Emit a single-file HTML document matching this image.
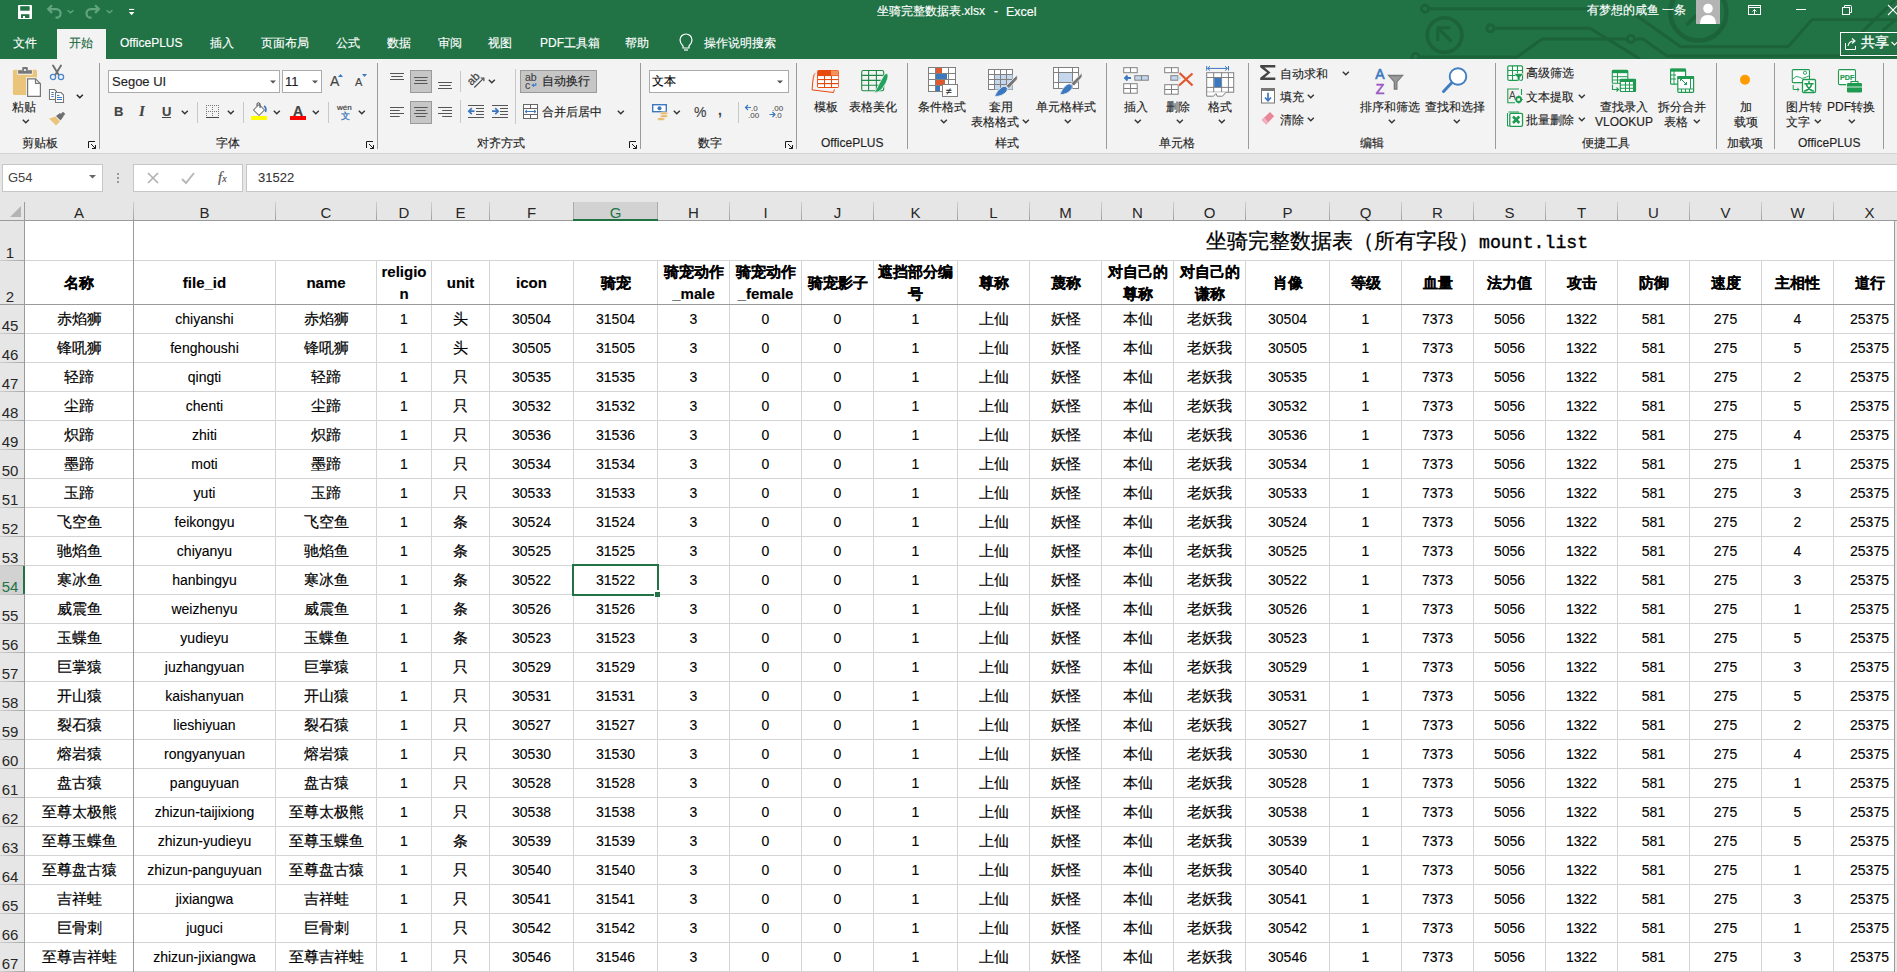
<!DOCTYPE html>
<html><head><meta charset="utf-8"><style>
html,body{margin:0;padding:0;}
body{width:1897px;height:972px;position:relative;overflow:hidden;background:#fff;font-family:'Liberation Sans', sans-serif;}
.t{position:absolute;white-space:nowrap;-webkit-text-stroke:0.15px currentColor;}
.r{position:absolute;}
.s{position:absolute;overflow:visible;}
</style></head><body>
<div class="r" style="left:0px;top:192px;width:1897px;height:780px;background:#ffffff"></div><div class="r" style="left:0px;top:201px;width:1897px;height:19px;background:#e6e6e6"></div><div class="r" style="left:0px;top:201px;width:24px;height:771px;background:#e6e6e6"></div><div class="r" style="left:25px;top:260px;width:1872px;height:1px;background:#d4d4d4"></div><div class="r" style="left:25px;top:333px;width:1872px;height:1px;background:#d4d4d4"></div><div class="r" style="left:25px;top:362px;width:1872px;height:1px;background:#d4d4d4"></div><div class="r" style="left:25px;top:391px;width:1872px;height:1px;background:#d4d4d4"></div><div class="r" style="left:25px;top:420px;width:1872px;height:1px;background:#d4d4d4"></div><div class="r" style="left:25px;top:449px;width:1872px;height:1px;background:#d4d4d4"></div><div class="r" style="left:25px;top:478px;width:1872px;height:1px;background:#d4d4d4"></div><div class="r" style="left:25px;top:507px;width:1872px;height:1px;background:#d4d4d4"></div><div class="r" style="left:25px;top:536px;width:1872px;height:1px;background:#d4d4d4"></div><div class="r" style="left:25px;top:565px;width:1872px;height:1px;background:#d4d4d4"></div><div class="r" style="left:25px;top:594px;width:1872px;height:1px;background:#d4d4d4"></div><div class="r" style="left:25px;top:623px;width:1872px;height:1px;background:#d4d4d4"></div><div class="r" style="left:25px;top:652px;width:1872px;height:1px;background:#d4d4d4"></div><div class="r" style="left:25px;top:681px;width:1872px;height:1px;background:#d4d4d4"></div><div class="r" style="left:25px;top:710px;width:1872px;height:1px;background:#d4d4d4"></div><div class="r" style="left:25px;top:739px;width:1872px;height:1px;background:#d4d4d4"></div><div class="r" style="left:25px;top:768px;width:1872px;height:1px;background:#d4d4d4"></div><div class="r" style="left:25px;top:797px;width:1872px;height:1px;background:#d4d4d4"></div><div class="r" style="left:25px;top:826px;width:1872px;height:1px;background:#d4d4d4"></div><div class="r" style="left:25px;top:855px;width:1872px;height:1px;background:#d4d4d4"></div><div class="r" style="left:25px;top:884px;width:1872px;height:1px;background:#d4d4d4"></div><div class="r" style="left:25px;top:913px;width:1872px;height:1px;background:#d4d4d4"></div><div class="r" style="left:25px;top:942px;width:1872px;height:1px;background:#d4d4d4"></div><div class="r" style="left:25px;top:971px;width:1872px;height:1px;background:#d4d4d4"></div><div class="r" style="left:0px;top:260px;width:24px;height:1px;background:linear-gradient(to right,#cfcfcf,#a6a6a6)"></div><div class="r" style="left:0px;top:333px;width:24px;height:1px;background:linear-gradient(to right,#cfcfcf,#a6a6a6)"></div><div class="r" style="left:0px;top:362px;width:24px;height:1px;background:linear-gradient(to right,#cfcfcf,#a6a6a6)"></div><div class="r" style="left:0px;top:391px;width:24px;height:1px;background:linear-gradient(to right,#cfcfcf,#a6a6a6)"></div><div class="r" style="left:0px;top:420px;width:24px;height:1px;background:linear-gradient(to right,#cfcfcf,#a6a6a6)"></div><div class="r" style="left:0px;top:449px;width:24px;height:1px;background:linear-gradient(to right,#cfcfcf,#a6a6a6)"></div><div class="r" style="left:0px;top:478px;width:24px;height:1px;background:linear-gradient(to right,#cfcfcf,#a6a6a6)"></div><div class="r" style="left:0px;top:507px;width:24px;height:1px;background:linear-gradient(to right,#cfcfcf,#a6a6a6)"></div><div class="r" style="left:0px;top:536px;width:24px;height:1px;background:linear-gradient(to right,#cfcfcf,#a6a6a6)"></div><div class="r" style="left:0px;top:565px;width:24px;height:1px;background:linear-gradient(to right,#cfcfcf,#a6a6a6)"></div><div class="r" style="left:0px;top:594px;width:24px;height:1px;background:linear-gradient(to right,#cfcfcf,#a6a6a6)"></div><div class="r" style="left:0px;top:623px;width:24px;height:1px;background:linear-gradient(to right,#cfcfcf,#a6a6a6)"></div><div class="r" style="left:0px;top:652px;width:24px;height:1px;background:linear-gradient(to right,#cfcfcf,#a6a6a6)"></div><div class="r" style="left:0px;top:681px;width:24px;height:1px;background:linear-gradient(to right,#cfcfcf,#a6a6a6)"></div><div class="r" style="left:0px;top:710px;width:24px;height:1px;background:linear-gradient(to right,#cfcfcf,#a6a6a6)"></div><div class="r" style="left:0px;top:739px;width:24px;height:1px;background:linear-gradient(to right,#cfcfcf,#a6a6a6)"></div><div class="r" style="left:0px;top:768px;width:24px;height:1px;background:linear-gradient(to right,#cfcfcf,#a6a6a6)"></div><div class="r" style="left:0px;top:797px;width:24px;height:1px;background:linear-gradient(to right,#cfcfcf,#a6a6a6)"></div><div class="r" style="left:0px;top:826px;width:24px;height:1px;background:linear-gradient(to right,#cfcfcf,#a6a6a6)"></div><div class="r" style="left:0px;top:855px;width:24px;height:1px;background:linear-gradient(to right,#cfcfcf,#a6a6a6)"></div><div class="r" style="left:0px;top:884px;width:24px;height:1px;background:linear-gradient(to right,#cfcfcf,#a6a6a6)"></div><div class="r" style="left:0px;top:913px;width:24px;height:1px;background:linear-gradient(to right,#cfcfcf,#a6a6a6)"></div><div class="r" style="left:0px;top:942px;width:24px;height:1px;background:linear-gradient(to right,#cfcfcf,#a6a6a6)"></div><div class="r" style="left:0px;top:971px;width:24px;height:1px;background:linear-gradient(to right,#cfcfcf,#a6a6a6)"></div><div class="r" style="left:275px;top:261px;width:1px;height:711px;background:#d4d4d4"></div><div class="r" style="left:376px;top:261px;width:1px;height:711px;background:#d4d4d4"></div><div class="r" style="left:431px;top:261px;width:1px;height:711px;background:#d4d4d4"></div><div class="r" style="left:489px;top:261px;width:1px;height:711px;background:#d4d4d4"></div><div class="r" style="left:573px;top:261px;width:1px;height:711px;background:#d4d4d4"></div><div class="r" style="left:657px;top:261px;width:1px;height:711px;background:#d4d4d4"></div><div class="r" style="left:729px;top:261px;width:1px;height:711px;background:#d4d4d4"></div><div class="r" style="left:801px;top:261px;width:1px;height:711px;background:#d4d4d4"></div><div class="r" style="left:873px;top:261px;width:1px;height:711px;background:#d4d4d4"></div><div class="r" style="left:957px;top:261px;width:1px;height:711px;background:#d4d4d4"></div><div class="r" style="left:1029px;top:261px;width:1px;height:711px;background:#d4d4d4"></div><div class="r" style="left:1101px;top:261px;width:1px;height:711px;background:#d4d4d4"></div><div class="r" style="left:1173px;top:261px;width:1px;height:711px;background:#d4d4d4"></div><div class="r" style="left:1245px;top:261px;width:1px;height:711px;background:#d4d4d4"></div><div class="r" style="left:1329px;top:261px;width:1px;height:711px;background:#d4d4d4"></div><div class="r" style="left:1401px;top:261px;width:1px;height:711px;background:#d4d4d4"></div><div class="r" style="left:1473px;top:261px;width:1px;height:711px;background:#d4d4d4"></div><div class="r" style="left:1545px;top:261px;width:1px;height:711px;background:#d4d4d4"></div><div class="r" style="left:1617px;top:261px;width:1px;height:711px;background:#d4d4d4"></div><div class="r" style="left:1689px;top:261px;width:1px;height:711px;background:#d4d4d4"></div><div class="r" style="left:1761px;top:261px;width:1px;height:711px;background:#d4d4d4"></div><div class="r" style="left:1833px;top:261px;width:1px;height:711px;background:#d4d4d4"></div><div class="r" style="left:0px;top:304px;width:1897px;height:1px;background:#9b9b9b"></div><div class="r" style="left:133px;top:220px;width:1px;height:752px;background:#9b9b9b"></div><div class="r" style="left:0px;top:220px;width:1897px;height:1px;background:#9b9b9b"></div><div class="r" style="left:24px;top:202px;width:1px;height:770px;background:#9b9b9b"></div><div class="r" style="left:1894px;top:220px;width:1px;height:752px;background:#9b9b9b"></div><div class="r" style="left:1895px;top:221px;width:2px;height:751px;background:#e6e6e6"></div><div class="r" style="left:133px;top:202px;width:1px;height:18px;background:linear-gradient(#cfcfcf,#a0a0a0)"></div><div class="r" style="left:275px;top:202px;width:1px;height:18px;background:linear-gradient(#cfcfcf,#a0a0a0)"></div><div class="r" style="left:376px;top:202px;width:1px;height:18px;background:linear-gradient(#cfcfcf,#a0a0a0)"></div><div class="r" style="left:431px;top:202px;width:1px;height:18px;background:linear-gradient(#cfcfcf,#a0a0a0)"></div><div class="r" style="left:489px;top:202px;width:1px;height:18px;background:linear-gradient(#cfcfcf,#a0a0a0)"></div><div class="r" style="left:573px;top:202px;width:1px;height:18px;background:linear-gradient(#cfcfcf,#a0a0a0)"></div><div class="r" style="left:657px;top:202px;width:1px;height:18px;background:linear-gradient(#cfcfcf,#a0a0a0)"></div><div class="r" style="left:729px;top:202px;width:1px;height:18px;background:linear-gradient(#cfcfcf,#a0a0a0)"></div><div class="r" style="left:801px;top:202px;width:1px;height:18px;background:linear-gradient(#cfcfcf,#a0a0a0)"></div><div class="r" style="left:873px;top:202px;width:1px;height:18px;background:linear-gradient(#cfcfcf,#a0a0a0)"></div><div class="r" style="left:957px;top:202px;width:1px;height:18px;background:linear-gradient(#cfcfcf,#a0a0a0)"></div><div class="r" style="left:1029px;top:202px;width:1px;height:18px;background:linear-gradient(#cfcfcf,#a0a0a0)"></div><div class="r" style="left:1101px;top:202px;width:1px;height:18px;background:linear-gradient(#cfcfcf,#a0a0a0)"></div><div class="r" style="left:1173px;top:202px;width:1px;height:18px;background:linear-gradient(#cfcfcf,#a0a0a0)"></div><div class="r" style="left:1245px;top:202px;width:1px;height:18px;background:linear-gradient(#cfcfcf,#a0a0a0)"></div><div class="r" style="left:1329px;top:202px;width:1px;height:18px;background:linear-gradient(#cfcfcf,#a0a0a0)"></div><div class="r" style="left:1401px;top:202px;width:1px;height:18px;background:linear-gradient(#cfcfcf,#a0a0a0)"></div><div class="r" style="left:1473px;top:202px;width:1px;height:18px;background:linear-gradient(#cfcfcf,#a0a0a0)"></div><div class="r" style="left:1545px;top:202px;width:1px;height:18px;background:linear-gradient(#cfcfcf,#a0a0a0)"></div><div class="r" style="left:1617px;top:202px;width:1px;height:18px;background:linear-gradient(#cfcfcf,#a0a0a0)"></div><div class="r" style="left:1689px;top:202px;width:1px;height:18px;background:linear-gradient(#cfcfcf,#a0a0a0)"></div><div class="r" style="left:1761px;top:202px;width:1px;height:18px;background:linear-gradient(#cfcfcf,#a0a0a0)"></div><div class="r" style="left:1833px;top:202px;width:1px;height:18px;background:linear-gradient(#cfcfcf,#a0a0a0)"></div><div class="r" style="left:573px;top:202px;width:85px;height:17px;background:#d2d2d2"></div><div class="r" style="left:573px;top:202px;width:1px;height:18px;background:#ababab"></div><div class="r" style="left:657px;top:202px;width:1px;height:18px;background:#ababab"></div><div class="r" style="left:573px;top:219px;width:85px;height:2px;background:#217346"></div><svg class="s" style="left:0px;top:201px;" width="24" height="19" viewBox="0 0 24 19"><polygon points="21,5 21,16 10,16" fill="#b4b4b4"/></svg><div class="t" style="left:49.0px;width:60px;text-align:center;top:205px;font-size:15px;line-height:15px;color:#262626;font-weight:normal;-webkit-text-stroke:0">A</div><div class="t" style="left:174.5px;width:60px;text-align:center;top:205px;font-size:15px;line-height:15px;color:#262626;font-weight:normal;-webkit-text-stroke:0">B</div><div class="t" style="left:296.0px;width:60px;text-align:center;top:205px;font-size:15px;line-height:15px;color:#262626;font-weight:normal;-webkit-text-stroke:0">C</div><div class="t" style="left:374.0px;width:60px;text-align:center;top:205px;font-size:15px;line-height:15px;color:#262626;font-weight:normal;-webkit-text-stroke:0">D</div><div class="t" style="left:430.5px;width:60px;text-align:center;top:205px;font-size:15px;line-height:15px;color:#262626;font-weight:normal;-webkit-text-stroke:0">E</div><div class="t" style="left:501.5px;width:60px;text-align:center;top:205px;font-size:15px;line-height:15px;color:#262626;font-weight:normal;-webkit-text-stroke:0">F</div><div class="t" style="left:585.5px;width:60px;text-align:center;top:205px;font-size:15px;line-height:15px;color:#217346;font-weight:normal;-webkit-text-stroke:0">G</div><div class="t" style="left:663.5px;width:60px;text-align:center;top:205px;font-size:15px;line-height:15px;color:#262626;font-weight:normal;-webkit-text-stroke:0">H</div><div class="t" style="left:735.5px;width:60px;text-align:center;top:205px;font-size:15px;line-height:15px;color:#262626;font-weight:normal;-webkit-text-stroke:0">I</div><div class="t" style="left:807.5px;width:60px;text-align:center;top:205px;font-size:15px;line-height:15px;color:#262626;font-weight:normal;-webkit-text-stroke:0">J</div><div class="t" style="left:885.5px;width:60px;text-align:center;top:205px;font-size:15px;line-height:15px;color:#262626;font-weight:normal;-webkit-text-stroke:0">K</div><div class="t" style="left:963.5px;width:60px;text-align:center;top:205px;font-size:15px;line-height:15px;color:#262626;font-weight:normal;-webkit-text-stroke:0">L</div><div class="t" style="left:1035.5px;width:60px;text-align:center;top:205px;font-size:15px;line-height:15px;color:#262626;font-weight:normal;-webkit-text-stroke:0">M</div><div class="t" style="left:1107.5px;width:60px;text-align:center;top:205px;font-size:15px;line-height:15px;color:#262626;font-weight:normal;-webkit-text-stroke:0">N</div><div class="t" style="left:1179.5px;width:60px;text-align:center;top:205px;font-size:15px;line-height:15px;color:#262626;font-weight:normal;-webkit-text-stroke:0">O</div><div class="t" style="left:1257.5px;width:60px;text-align:center;top:205px;font-size:15px;line-height:15px;color:#262626;font-weight:normal;-webkit-text-stroke:0">P</div><div class="t" style="left:1335.5px;width:60px;text-align:center;top:205px;font-size:15px;line-height:15px;color:#262626;font-weight:normal;-webkit-text-stroke:0">Q</div><div class="t" style="left:1407.5px;width:60px;text-align:center;top:205px;font-size:15px;line-height:15px;color:#262626;font-weight:normal;-webkit-text-stroke:0">R</div><div class="t" style="left:1479.5px;width:60px;text-align:center;top:205px;font-size:15px;line-height:15px;color:#262626;font-weight:normal;-webkit-text-stroke:0">S</div><div class="t" style="left:1551.5px;width:60px;text-align:center;top:205px;font-size:15px;line-height:15px;color:#262626;font-weight:normal;-webkit-text-stroke:0">T</div><div class="t" style="left:1623.5px;width:60px;text-align:center;top:205px;font-size:15px;line-height:15px;color:#262626;font-weight:normal;-webkit-text-stroke:0">U</div><div class="t" style="left:1695.5px;width:60px;text-align:center;top:205px;font-size:15px;line-height:15px;color:#262626;font-weight:normal;-webkit-text-stroke:0">V</div><div class="t" style="left:1767.5px;width:60px;text-align:center;top:205px;font-size:15px;line-height:15px;color:#262626;font-weight:normal;-webkit-text-stroke:0">W</div><div class="t" style="left:1839.5px;width:60px;text-align:center;top:205px;font-size:15px;line-height:15px;color:#262626;font-weight:normal;-webkit-text-stroke:0">X</div><div class="t" style="left:-5.0px;width:30px;text-align:center;top:245px;font-size:15px;line-height:15px;color:#262626;font-weight:normal;-webkit-text-stroke:0">1</div><div class="t" style="left:-5.0px;width:30px;text-align:center;top:289px;font-size:15px;line-height:15px;color:#262626;font-weight:normal;-webkit-text-stroke:0">2</div><div class="t" style="left:-5.0px;width:30px;text-align:center;top:318px;font-size:15px;line-height:15px;color:#262626;font-weight:normal;-webkit-text-stroke:0">45</div><div class="t" style="left:-5.0px;width:30px;text-align:center;top:347px;font-size:15px;line-height:15px;color:#262626;font-weight:normal;-webkit-text-stroke:0">46</div><div class="t" style="left:-5.0px;width:30px;text-align:center;top:376px;font-size:15px;line-height:15px;color:#262626;font-weight:normal;-webkit-text-stroke:0">47</div><div class="t" style="left:-5.0px;width:30px;text-align:center;top:405px;font-size:15px;line-height:15px;color:#262626;font-weight:normal;-webkit-text-stroke:0">48</div><div class="t" style="left:-5.0px;width:30px;text-align:center;top:434px;font-size:15px;line-height:15px;color:#262626;font-weight:normal;-webkit-text-stroke:0">49</div><div class="t" style="left:-5.0px;width:30px;text-align:center;top:463px;font-size:15px;line-height:15px;color:#262626;font-weight:normal;-webkit-text-stroke:0">50</div><div class="t" style="left:-5.0px;width:30px;text-align:center;top:492px;font-size:15px;line-height:15px;color:#262626;font-weight:normal;-webkit-text-stroke:0">51</div><div class="t" style="left:-5.0px;width:30px;text-align:center;top:521px;font-size:15px;line-height:15px;color:#262626;font-weight:normal;-webkit-text-stroke:0">52</div><div class="t" style="left:-5.0px;width:30px;text-align:center;top:550px;font-size:15px;line-height:15px;color:#262626;font-weight:normal;-webkit-text-stroke:0">53</div><div class="r" style="left:0px;top:566px;width:23px;height:28px;background:#d2d2d2"></div><div class="r" style="left:23px;top:566px;width:2px;height:28px;background:#217346"></div><div class="t" style="left:-5.0px;width:30px;text-align:center;top:579px;font-size:15px;line-height:15px;color:#217346;font-weight:normal;-webkit-text-stroke:0">54</div><div class="t" style="left:-5.0px;width:30px;text-align:center;top:608px;font-size:15px;line-height:15px;color:#262626;font-weight:normal;-webkit-text-stroke:0">55</div><div class="t" style="left:-5.0px;width:30px;text-align:center;top:637px;font-size:15px;line-height:15px;color:#262626;font-weight:normal;-webkit-text-stroke:0">56</div><div class="t" style="left:-5.0px;width:30px;text-align:center;top:666px;font-size:15px;line-height:15px;color:#262626;font-weight:normal;-webkit-text-stroke:0">57</div><div class="t" style="left:-5.0px;width:30px;text-align:center;top:695px;font-size:15px;line-height:15px;color:#262626;font-weight:normal;-webkit-text-stroke:0">58</div><div class="t" style="left:-5.0px;width:30px;text-align:center;top:724px;font-size:15px;line-height:15px;color:#262626;font-weight:normal;-webkit-text-stroke:0">59</div><div class="t" style="left:-5.0px;width:30px;text-align:center;top:753px;font-size:15px;line-height:15px;color:#262626;font-weight:normal;-webkit-text-stroke:0">60</div><div class="t" style="left:-5.0px;width:30px;text-align:center;top:782px;font-size:15px;line-height:15px;color:#262626;font-weight:normal;-webkit-text-stroke:0">61</div><div class="t" style="left:-5.0px;width:30px;text-align:center;top:811px;font-size:15px;line-height:15px;color:#262626;font-weight:normal;-webkit-text-stroke:0">62</div><div class="t" style="left:-5.0px;width:30px;text-align:center;top:840px;font-size:15px;line-height:15px;color:#262626;font-weight:normal;-webkit-text-stroke:0">63</div><div class="t" style="left:-5.0px;width:30px;text-align:center;top:869px;font-size:15px;line-height:15px;color:#262626;font-weight:normal;-webkit-text-stroke:0">64</div><div class="t" style="left:-5.0px;width:30px;text-align:center;top:898px;font-size:15px;line-height:15px;color:#262626;font-weight:normal;-webkit-text-stroke:0">65</div><div class="t" style="left:-5.0px;width:30px;text-align:center;top:927px;font-size:15px;line-height:15px;color:#262626;font-weight:normal;-webkit-text-stroke:0">66</div><div class="t" style="left:-5.0px;width:30px;text-align:center;top:956px;font-size:15px;line-height:15px;color:#262626;font-weight:normal;-webkit-text-stroke:0">67</div><div class="t" style="left:4.5px;width:149px;text-align:center;top:311px;font-size:15px;line-height:15px;color:#000;font-weight:normal;-webkit-text-stroke:0.2px #000">赤焰狮</div><div class="t" style="left:113.5px;width:182px;text-align:center;top:312px;font-size:14px;line-height:14px;color:#000;font-weight:normal;-webkit-text-stroke:0.1px #000">chiyanshi</div><div class="t" style="left:255.5px;width:141px;text-align:center;top:311px;font-size:15px;line-height:15px;color:#000;font-weight:normal;-webkit-text-stroke:0.2px #000">赤焰狮</div><div class="t" style="left:356.5px;width:95px;text-align:center;top:312px;font-size:14px;line-height:14px;color:#000;font-weight:normal;-webkit-text-stroke:0.1px #000">1</div><div class="t" style="left:411.5px;width:98px;text-align:center;top:311px;font-size:15px;line-height:15px;color:#000;font-weight:normal;-webkit-text-stroke:0.2px #000">头</div><div class="t" style="left:469.5px;width:124px;text-align:center;top:312px;font-size:14px;line-height:14px;color:#000;font-weight:normal;-webkit-text-stroke:0.1px #000">30504</div><div class="t" style="left:553.5px;width:124px;text-align:center;top:312px;font-size:14px;line-height:14px;color:#000;font-weight:normal;-webkit-text-stroke:0.1px #000">31504</div><div class="t" style="left:637.5px;width:112px;text-align:center;top:312px;font-size:14px;line-height:14px;color:#000;font-weight:normal;-webkit-text-stroke:0.1px #000">3</div><div class="t" style="left:709.5px;width:112px;text-align:center;top:312px;font-size:14px;line-height:14px;color:#000;font-weight:normal;-webkit-text-stroke:0.1px #000">0</div><div class="t" style="left:781.5px;width:112px;text-align:center;top:312px;font-size:14px;line-height:14px;color:#000;font-weight:normal;-webkit-text-stroke:0.1px #000">0</div><div class="t" style="left:853.5px;width:124px;text-align:center;top:312px;font-size:14px;line-height:14px;color:#000;font-weight:normal;-webkit-text-stroke:0.1px #000">1</div><div class="t" style="left:937.5px;width:112px;text-align:center;top:311px;font-size:15px;line-height:15px;color:#000;font-weight:normal;-webkit-text-stroke:0.2px #000">上仙</div><div class="t" style="left:1009.5px;width:112px;text-align:center;top:311px;font-size:15px;line-height:15px;color:#000;font-weight:normal;-webkit-text-stroke:0.2px #000">妖怪</div><div class="t" style="left:1081.5px;width:112px;text-align:center;top:311px;font-size:15px;line-height:15px;color:#000;font-weight:normal;-webkit-text-stroke:0.2px #000">本仙</div><div class="t" style="left:1153.5px;width:112px;text-align:center;top:311px;font-size:15px;line-height:15px;color:#000;font-weight:normal;-webkit-text-stroke:0.2px #000">老妖我</div><div class="t" style="left:1225.5px;width:124px;text-align:center;top:312px;font-size:14px;line-height:14px;color:#000;font-weight:normal;-webkit-text-stroke:0.1px #000">30504</div><div class="t" style="left:1309.5px;width:112px;text-align:center;top:312px;font-size:14px;line-height:14px;color:#000;font-weight:normal;-webkit-text-stroke:0.1px #000">1</div><div class="t" style="left:1381.5px;width:112px;text-align:center;top:312px;font-size:14px;line-height:14px;color:#000;font-weight:normal;-webkit-text-stroke:0.1px #000">7373</div><div class="t" style="left:1453.5px;width:112px;text-align:center;top:312px;font-size:14px;line-height:14px;color:#000;font-weight:normal;-webkit-text-stroke:0.1px #000">5056</div><div class="t" style="left:1525.5px;width:112px;text-align:center;top:312px;font-size:14px;line-height:14px;color:#000;font-weight:normal;-webkit-text-stroke:0.1px #000">1322</div><div class="t" style="left:1597.5px;width:112px;text-align:center;top:312px;font-size:14px;line-height:14px;color:#000;font-weight:normal;-webkit-text-stroke:0.1px #000">581</div><div class="t" style="left:1669.5px;width:112px;text-align:center;top:312px;font-size:14px;line-height:14px;color:#000;font-weight:normal;-webkit-text-stroke:0.1px #000">275</div><div class="t" style="left:1741.5px;width:112px;text-align:center;top:312px;font-size:14px;line-height:14px;color:#000;font-weight:normal;-webkit-text-stroke:0.1px #000">4</div><div class="t" style="left:1813.5px;width:112px;text-align:center;top:312px;font-size:14px;line-height:14px;color:#000;font-weight:normal;-webkit-text-stroke:0.1px #000">25375</div><div class="t" style="left:4.5px;width:149px;text-align:center;top:340px;font-size:15px;line-height:15px;color:#000;font-weight:normal;-webkit-text-stroke:0.2px #000">锋吼狮</div><div class="t" style="left:113.5px;width:182px;text-align:center;top:341px;font-size:14px;line-height:14px;color:#000;font-weight:normal;-webkit-text-stroke:0.1px #000">fenghoushi</div><div class="t" style="left:255.5px;width:141px;text-align:center;top:340px;font-size:15px;line-height:15px;color:#000;font-weight:normal;-webkit-text-stroke:0.2px #000">锋吼狮</div><div class="t" style="left:356.5px;width:95px;text-align:center;top:341px;font-size:14px;line-height:14px;color:#000;font-weight:normal;-webkit-text-stroke:0.1px #000">1</div><div class="t" style="left:411.5px;width:98px;text-align:center;top:340px;font-size:15px;line-height:15px;color:#000;font-weight:normal;-webkit-text-stroke:0.2px #000">头</div><div class="t" style="left:469.5px;width:124px;text-align:center;top:341px;font-size:14px;line-height:14px;color:#000;font-weight:normal;-webkit-text-stroke:0.1px #000">30505</div><div class="t" style="left:553.5px;width:124px;text-align:center;top:341px;font-size:14px;line-height:14px;color:#000;font-weight:normal;-webkit-text-stroke:0.1px #000">31505</div><div class="t" style="left:637.5px;width:112px;text-align:center;top:341px;font-size:14px;line-height:14px;color:#000;font-weight:normal;-webkit-text-stroke:0.1px #000">3</div><div class="t" style="left:709.5px;width:112px;text-align:center;top:341px;font-size:14px;line-height:14px;color:#000;font-weight:normal;-webkit-text-stroke:0.1px #000">0</div><div class="t" style="left:781.5px;width:112px;text-align:center;top:341px;font-size:14px;line-height:14px;color:#000;font-weight:normal;-webkit-text-stroke:0.1px #000">0</div><div class="t" style="left:853.5px;width:124px;text-align:center;top:341px;font-size:14px;line-height:14px;color:#000;font-weight:normal;-webkit-text-stroke:0.1px #000">1</div><div class="t" style="left:937.5px;width:112px;text-align:center;top:340px;font-size:15px;line-height:15px;color:#000;font-weight:normal;-webkit-text-stroke:0.2px #000">上仙</div><div class="t" style="left:1009.5px;width:112px;text-align:center;top:340px;font-size:15px;line-height:15px;color:#000;font-weight:normal;-webkit-text-stroke:0.2px #000">妖怪</div><div class="t" style="left:1081.5px;width:112px;text-align:center;top:340px;font-size:15px;line-height:15px;color:#000;font-weight:normal;-webkit-text-stroke:0.2px #000">本仙</div><div class="t" style="left:1153.5px;width:112px;text-align:center;top:340px;font-size:15px;line-height:15px;color:#000;font-weight:normal;-webkit-text-stroke:0.2px #000">老妖我</div><div class="t" style="left:1225.5px;width:124px;text-align:center;top:341px;font-size:14px;line-height:14px;color:#000;font-weight:normal;-webkit-text-stroke:0.1px #000">30505</div><div class="t" style="left:1309.5px;width:112px;text-align:center;top:341px;font-size:14px;line-height:14px;color:#000;font-weight:normal;-webkit-text-stroke:0.1px #000">1</div><div class="t" style="left:1381.5px;width:112px;text-align:center;top:341px;font-size:14px;line-height:14px;color:#000;font-weight:normal;-webkit-text-stroke:0.1px #000">7373</div><div class="t" style="left:1453.5px;width:112px;text-align:center;top:341px;font-size:14px;line-height:14px;color:#000;font-weight:normal;-webkit-text-stroke:0.1px #000">5056</div><div class="t" style="left:1525.5px;width:112px;text-align:center;top:341px;font-size:14px;line-height:14px;color:#000;font-weight:normal;-webkit-text-stroke:0.1px #000">1322</div><div class="t" style="left:1597.5px;width:112px;text-align:center;top:341px;font-size:14px;line-height:14px;color:#000;font-weight:normal;-webkit-text-stroke:0.1px #000">581</div><div class="t" style="left:1669.5px;width:112px;text-align:center;top:341px;font-size:14px;line-height:14px;color:#000;font-weight:normal;-webkit-text-stroke:0.1px #000">275</div><div class="t" style="left:1741.5px;width:112px;text-align:center;top:341px;font-size:14px;line-height:14px;color:#000;font-weight:normal;-webkit-text-stroke:0.1px #000">5</div><div class="t" style="left:1813.5px;width:112px;text-align:center;top:341px;font-size:14px;line-height:14px;color:#000;font-weight:normal;-webkit-text-stroke:0.1px #000">25375</div><div class="t" style="left:4.5px;width:149px;text-align:center;top:369px;font-size:15px;line-height:15px;color:#000;font-weight:normal;-webkit-text-stroke:0.2px #000">轻蹄</div><div class="t" style="left:113.5px;width:182px;text-align:center;top:370px;font-size:14px;line-height:14px;color:#000;font-weight:normal;-webkit-text-stroke:0.1px #000">qingti</div><div class="t" style="left:255.5px;width:141px;text-align:center;top:369px;font-size:15px;line-height:15px;color:#000;font-weight:normal;-webkit-text-stroke:0.2px #000">轻蹄</div><div class="t" style="left:356.5px;width:95px;text-align:center;top:370px;font-size:14px;line-height:14px;color:#000;font-weight:normal;-webkit-text-stroke:0.1px #000">1</div><div class="t" style="left:411.5px;width:98px;text-align:center;top:369px;font-size:15px;line-height:15px;color:#000;font-weight:normal;-webkit-text-stroke:0.2px #000">只</div><div class="t" style="left:469.5px;width:124px;text-align:center;top:370px;font-size:14px;line-height:14px;color:#000;font-weight:normal;-webkit-text-stroke:0.1px #000">30535</div><div class="t" style="left:553.5px;width:124px;text-align:center;top:370px;font-size:14px;line-height:14px;color:#000;font-weight:normal;-webkit-text-stroke:0.1px #000">31535</div><div class="t" style="left:637.5px;width:112px;text-align:center;top:370px;font-size:14px;line-height:14px;color:#000;font-weight:normal;-webkit-text-stroke:0.1px #000">3</div><div class="t" style="left:709.5px;width:112px;text-align:center;top:370px;font-size:14px;line-height:14px;color:#000;font-weight:normal;-webkit-text-stroke:0.1px #000">0</div><div class="t" style="left:781.5px;width:112px;text-align:center;top:370px;font-size:14px;line-height:14px;color:#000;font-weight:normal;-webkit-text-stroke:0.1px #000">0</div><div class="t" style="left:853.5px;width:124px;text-align:center;top:370px;font-size:14px;line-height:14px;color:#000;font-weight:normal;-webkit-text-stroke:0.1px #000">1</div><div class="t" style="left:937.5px;width:112px;text-align:center;top:369px;font-size:15px;line-height:15px;color:#000;font-weight:normal;-webkit-text-stroke:0.2px #000">上仙</div><div class="t" style="left:1009.5px;width:112px;text-align:center;top:369px;font-size:15px;line-height:15px;color:#000;font-weight:normal;-webkit-text-stroke:0.2px #000">妖怪</div><div class="t" style="left:1081.5px;width:112px;text-align:center;top:369px;font-size:15px;line-height:15px;color:#000;font-weight:normal;-webkit-text-stroke:0.2px #000">本仙</div><div class="t" style="left:1153.5px;width:112px;text-align:center;top:369px;font-size:15px;line-height:15px;color:#000;font-weight:normal;-webkit-text-stroke:0.2px #000">老妖我</div><div class="t" style="left:1225.5px;width:124px;text-align:center;top:370px;font-size:14px;line-height:14px;color:#000;font-weight:normal;-webkit-text-stroke:0.1px #000">30535</div><div class="t" style="left:1309.5px;width:112px;text-align:center;top:370px;font-size:14px;line-height:14px;color:#000;font-weight:normal;-webkit-text-stroke:0.1px #000">1</div><div class="t" style="left:1381.5px;width:112px;text-align:center;top:370px;font-size:14px;line-height:14px;color:#000;font-weight:normal;-webkit-text-stroke:0.1px #000">7373</div><div class="t" style="left:1453.5px;width:112px;text-align:center;top:370px;font-size:14px;line-height:14px;color:#000;font-weight:normal;-webkit-text-stroke:0.1px #000">5056</div><div class="t" style="left:1525.5px;width:112px;text-align:center;top:370px;font-size:14px;line-height:14px;color:#000;font-weight:normal;-webkit-text-stroke:0.1px #000">1322</div><div class="t" style="left:1597.5px;width:112px;text-align:center;top:370px;font-size:14px;line-height:14px;color:#000;font-weight:normal;-webkit-text-stroke:0.1px #000">581</div><div class="t" style="left:1669.5px;width:112px;text-align:center;top:370px;font-size:14px;line-height:14px;color:#000;font-weight:normal;-webkit-text-stroke:0.1px #000">275</div><div class="t" style="left:1741.5px;width:112px;text-align:center;top:370px;font-size:14px;line-height:14px;color:#000;font-weight:normal;-webkit-text-stroke:0.1px #000">2</div><div class="t" style="left:1813.5px;width:112px;text-align:center;top:370px;font-size:14px;line-height:14px;color:#000;font-weight:normal;-webkit-text-stroke:0.1px #000">25375</div><div class="t" style="left:4.5px;width:149px;text-align:center;top:398px;font-size:15px;line-height:15px;color:#000;font-weight:normal;-webkit-text-stroke:0.2px #000">尘蹄</div><div class="t" style="left:113.5px;width:182px;text-align:center;top:399px;font-size:14px;line-height:14px;color:#000;font-weight:normal;-webkit-text-stroke:0.1px #000">chenti</div><div class="t" style="left:255.5px;width:141px;text-align:center;top:398px;font-size:15px;line-height:15px;color:#000;font-weight:normal;-webkit-text-stroke:0.2px #000">尘蹄</div><div class="t" style="left:356.5px;width:95px;text-align:center;top:399px;font-size:14px;line-height:14px;color:#000;font-weight:normal;-webkit-text-stroke:0.1px #000">1</div><div class="t" style="left:411.5px;width:98px;text-align:center;top:398px;font-size:15px;line-height:15px;color:#000;font-weight:normal;-webkit-text-stroke:0.2px #000">只</div><div class="t" style="left:469.5px;width:124px;text-align:center;top:399px;font-size:14px;line-height:14px;color:#000;font-weight:normal;-webkit-text-stroke:0.1px #000">30532</div><div class="t" style="left:553.5px;width:124px;text-align:center;top:399px;font-size:14px;line-height:14px;color:#000;font-weight:normal;-webkit-text-stroke:0.1px #000">31532</div><div class="t" style="left:637.5px;width:112px;text-align:center;top:399px;font-size:14px;line-height:14px;color:#000;font-weight:normal;-webkit-text-stroke:0.1px #000">3</div><div class="t" style="left:709.5px;width:112px;text-align:center;top:399px;font-size:14px;line-height:14px;color:#000;font-weight:normal;-webkit-text-stroke:0.1px #000">0</div><div class="t" style="left:781.5px;width:112px;text-align:center;top:399px;font-size:14px;line-height:14px;color:#000;font-weight:normal;-webkit-text-stroke:0.1px #000">0</div><div class="t" style="left:853.5px;width:124px;text-align:center;top:399px;font-size:14px;line-height:14px;color:#000;font-weight:normal;-webkit-text-stroke:0.1px #000">1</div><div class="t" style="left:937.5px;width:112px;text-align:center;top:398px;font-size:15px;line-height:15px;color:#000;font-weight:normal;-webkit-text-stroke:0.2px #000">上仙</div><div class="t" style="left:1009.5px;width:112px;text-align:center;top:398px;font-size:15px;line-height:15px;color:#000;font-weight:normal;-webkit-text-stroke:0.2px #000">妖怪</div><div class="t" style="left:1081.5px;width:112px;text-align:center;top:398px;font-size:15px;line-height:15px;color:#000;font-weight:normal;-webkit-text-stroke:0.2px #000">本仙</div><div class="t" style="left:1153.5px;width:112px;text-align:center;top:398px;font-size:15px;line-height:15px;color:#000;font-weight:normal;-webkit-text-stroke:0.2px #000">老妖我</div><div class="t" style="left:1225.5px;width:124px;text-align:center;top:399px;font-size:14px;line-height:14px;color:#000;font-weight:normal;-webkit-text-stroke:0.1px #000">30532</div><div class="t" style="left:1309.5px;width:112px;text-align:center;top:399px;font-size:14px;line-height:14px;color:#000;font-weight:normal;-webkit-text-stroke:0.1px #000">1</div><div class="t" style="left:1381.5px;width:112px;text-align:center;top:399px;font-size:14px;line-height:14px;color:#000;font-weight:normal;-webkit-text-stroke:0.1px #000">7373</div><div class="t" style="left:1453.5px;width:112px;text-align:center;top:399px;font-size:14px;line-height:14px;color:#000;font-weight:normal;-webkit-text-stroke:0.1px #000">5056</div><div class="t" style="left:1525.5px;width:112px;text-align:center;top:399px;font-size:14px;line-height:14px;color:#000;font-weight:normal;-webkit-text-stroke:0.1px #000">1322</div><div class="t" style="left:1597.5px;width:112px;text-align:center;top:399px;font-size:14px;line-height:14px;color:#000;font-weight:normal;-webkit-text-stroke:0.1px #000">581</div><div class="t" style="left:1669.5px;width:112px;text-align:center;top:399px;font-size:14px;line-height:14px;color:#000;font-weight:normal;-webkit-text-stroke:0.1px #000">275</div><div class="t" style="left:1741.5px;width:112px;text-align:center;top:399px;font-size:14px;line-height:14px;color:#000;font-weight:normal;-webkit-text-stroke:0.1px #000">5</div><div class="t" style="left:1813.5px;width:112px;text-align:center;top:399px;font-size:14px;line-height:14px;color:#000;font-weight:normal;-webkit-text-stroke:0.1px #000">25375</div><div class="t" style="left:4.5px;width:149px;text-align:center;top:427px;font-size:15px;line-height:15px;color:#000;font-weight:normal;-webkit-text-stroke:0.2px #000">炽蹄</div><div class="t" style="left:113.5px;width:182px;text-align:center;top:428px;font-size:14px;line-height:14px;color:#000;font-weight:normal;-webkit-text-stroke:0.1px #000">zhiti</div><div class="t" style="left:255.5px;width:141px;text-align:center;top:427px;font-size:15px;line-height:15px;color:#000;font-weight:normal;-webkit-text-stroke:0.2px #000">炽蹄</div><div class="t" style="left:356.5px;width:95px;text-align:center;top:428px;font-size:14px;line-height:14px;color:#000;font-weight:normal;-webkit-text-stroke:0.1px #000">1</div><div class="t" style="left:411.5px;width:98px;text-align:center;top:427px;font-size:15px;line-height:15px;color:#000;font-weight:normal;-webkit-text-stroke:0.2px #000">只</div><div class="t" style="left:469.5px;width:124px;text-align:center;top:428px;font-size:14px;line-height:14px;color:#000;font-weight:normal;-webkit-text-stroke:0.1px #000">30536</div><div class="t" style="left:553.5px;width:124px;text-align:center;top:428px;font-size:14px;line-height:14px;color:#000;font-weight:normal;-webkit-text-stroke:0.1px #000">31536</div><div class="t" style="left:637.5px;width:112px;text-align:center;top:428px;font-size:14px;line-height:14px;color:#000;font-weight:normal;-webkit-text-stroke:0.1px #000">3</div><div class="t" style="left:709.5px;width:112px;text-align:center;top:428px;font-size:14px;line-height:14px;color:#000;font-weight:normal;-webkit-text-stroke:0.1px #000">0</div><div class="t" style="left:781.5px;width:112px;text-align:center;top:428px;font-size:14px;line-height:14px;color:#000;font-weight:normal;-webkit-text-stroke:0.1px #000">0</div><div class="t" style="left:853.5px;width:124px;text-align:center;top:428px;font-size:14px;line-height:14px;color:#000;font-weight:normal;-webkit-text-stroke:0.1px #000">1</div><div class="t" style="left:937.5px;width:112px;text-align:center;top:427px;font-size:15px;line-height:15px;color:#000;font-weight:normal;-webkit-text-stroke:0.2px #000">上仙</div><div class="t" style="left:1009.5px;width:112px;text-align:center;top:427px;font-size:15px;line-height:15px;color:#000;font-weight:normal;-webkit-text-stroke:0.2px #000">妖怪</div><div class="t" style="left:1081.5px;width:112px;text-align:center;top:427px;font-size:15px;line-height:15px;color:#000;font-weight:normal;-webkit-text-stroke:0.2px #000">本仙</div><div class="t" style="left:1153.5px;width:112px;text-align:center;top:427px;font-size:15px;line-height:15px;color:#000;font-weight:normal;-webkit-text-stroke:0.2px #000">老妖我</div><div class="t" style="left:1225.5px;width:124px;text-align:center;top:428px;font-size:14px;line-height:14px;color:#000;font-weight:normal;-webkit-text-stroke:0.1px #000">30536</div><div class="t" style="left:1309.5px;width:112px;text-align:center;top:428px;font-size:14px;line-height:14px;color:#000;font-weight:normal;-webkit-text-stroke:0.1px #000">1</div><div class="t" style="left:1381.5px;width:112px;text-align:center;top:428px;font-size:14px;line-height:14px;color:#000;font-weight:normal;-webkit-text-stroke:0.1px #000">7373</div><div class="t" style="left:1453.5px;width:112px;text-align:center;top:428px;font-size:14px;line-height:14px;color:#000;font-weight:normal;-webkit-text-stroke:0.1px #000">5056</div><div class="t" style="left:1525.5px;width:112px;text-align:center;top:428px;font-size:14px;line-height:14px;color:#000;font-weight:normal;-webkit-text-stroke:0.1px #000">1322</div><div class="t" style="left:1597.5px;width:112px;text-align:center;top:428px;font-size:14px;line-height:14px;color:#000;font-weight:normal;-webkit-text-stroke:0.1px #000">581</div><div class="t" style="left:1669.5px;width:112px;text-align:center;top:428px;font-size:14px;line-height:14px;color:#000;font-weight:normal;-webkit-text-stroke:0.1px #000">275</div><div class="t" style="left:1741.5px;width:112px;text-align:center;top:428px;font-size:14px;line-height:14px;color:#000;font-weight:normal;-webkit-text-stroke:0.1px #000">4</div><div class="t" style="left:1813.5px;width:112px;text-align:center;top:428px;font-size:14px;line-height:14px;color:#000;font-weight:normal;-webkit-text-stroke:0.1px #000">25375</div><div class="t" style="left:4.5px;width:149px;text-align:center;top:456px;font-size:15px;line-height:15px;color:#000;font-weight:normal;-webkit-text-stroke:0.2px #000">墨蹄</div><div class="t" style="left:113.5px;width:182px;text-align:center;top:457px;font-size:14px;line-height:14px;color:#000;font-weight:normal;-webkit-text-stroke:0.1px #000">moti</div><div class="t" style="left:255.5px;width:141px;text-align:center;top:456px;font-size:15px;line-height:15px;color:#000;font-weight:normal;-webkit-text-stroke:0.2px #000">墨蹄</div><div class="t" style="left:356.5px;width:95px;text-align:center;top:457px;font-size:14px;line-height:14px;color:#000;font-weight:normal;-webkit-text-stroke:0.1px #000">1</div><div class="t" style="left:411.5px;width:98px;text-align:center;top:456px;font-size:15px;line-height:15px;color:#000;font-weight:normal;-webkit-text-stroke:0.2px #000">只</div><div class="t" style="left:469.5px;width:124px;text-align:center;top:457px;font-size:14px;line-height:14px;color:#000;font-weight:normal;-webkit-text-stroke:0.1px #000">30534</div><div class="t" style="left:553.5px;width:124px;text-align:center;top:457px;font-size:14px;line-height:14px;color:#000;font-weight:normal;-webkit-text-stroke:0.1px #000">31534</div><div class="t" style="left:637.5px;width:112px;text-align:center;top:457px;font-size:14px;line-height:14px;color:#000;font-weight:normal;-webkit-text-stroke:0.1px #000">3</div><div class="t" style="left:709.5px;width:112px;text-align:center;top:457px;font-size:14px;line-height:14px;color:#000;font-weight:normal;-webkit-text-stroke:0.1px #000">0</div><div class="t" style="left:781.5px;width:112px;text-align:center;top:457px;font-size:14px;line-height:14px;color:#000;font-weight:normal;-webkit-text-stroke:0.1px #000">0</div><div class="t" style="left:853.5px;width:124px;text-align:center;top:457px;font-size:14px;line-height:14px;color:#000;font-weight:normal;-webkit-text-stroke:0.1px #000">1</div><div class="t" style="left:937.5px;width:112px;text-align:center;top:456px;font-size:15px;line-height:15px;color:#000;font-weight:normal;-webkit-text-stroke:0.2px #000">上仙</div><div class="t" style="left:1009.5px;width:112px;text-align:center;top:456px;font-size:15px;line-height:15px;color:#000;font-weight:normal;-webkit-text-stroke:0.2px #000">妖怪</div><div class="t" style="left:1081.5px;width:112px;text-align:center;top:456px;font-size:15px;line-height:15px;color:#000;font-weight:normal;-webkit-text-stroke:0.2px #000">本仙</div><div class="t" style="left:1153.5px;width:112px;text-align:center;top:456px;font-size:15px;line-height:15px;color:#000;font-weight:normal;-webkit-text-stroke:0.2px #000">老妖我</div><div class="t" style="left:1225.5px;width:124px;text-align:center;top:457px;font-size:14px;line-height:14px;color:#000;font-weight:normal;-webkit-text-stroke:0.1px #000">30534</div><div class="t" style="left:1309.5px;width:112px;text-align:center;top:457px;font-size:14px;line-height:14px;color:#000;font-weight:normal;-webkit-text-stroke:0.1px #000">1</div><div class="t" style="left:1381.5px;width:112px;text-align:center;top:457px;font-size:14px;line-height:14px;color:#000;font-weight:normal;-webkit-text-stroke:0.1px #000">7373</div><div class="t" style="left:1453.5px;width:112px;text-align:center;top:457px;font-size:14px;line-height:14px;color:#000;font-weight:normal;-webkit-text-stroke:0.1px #000">5056</div><div class="t" style="left:1525.5px;width:112px;text-align:center;top:457px;font-size:14px;line-height:14px;color:#000;font-weight:normal;-webkit-text-stroke:0.1px #000">1322</div><div class="t" style="left:1597.5px;width:112px;text-align:center;top:457px;font-size:14px;line-height:14px;color:#000;font-weight:normal;-webkit-text-stroke:0.1px #000">581</div><div class="t" style="left:1669.5px;width:112px;text-align:center;top:457px;font-size:14px;line-height:14px;color:#000;font-weight:normal;-webkit-text-stroke:0.1px #000">275</div><div class="t" style="left:1741.5px;width:112px;text-align:center;top:457px;font-size:14px;line-height:14px;color:#000;font-weight:normal;-webkit-text-stroke:0.1px #000">1</div><div class="t" style="left:1813.5px;width:112px;text-align:center;top:457px;font-size:14px;line-height:14px;color:#000;font-weight:normal;-webkit-text-stroke:0.1px #000">25375</div><div class="t" style="left:4.5px;width:149px;text-align:center;top:485px;font-size:15px;line-height:15px;color:#000;font-weight:normal;-webkit-text-stroke:0.2px #000">玉蹄</div><div class="t" style="left:113.5px;width:182px;text-align:center;top:486px;font-size:14px;line-height:14px;color:#000;font-weight:normal;-webkit-text-stroke:0.1px #000">yuti</div><div class="t" style="left:255.5px;width:141px;text-align:center;top:485px;font-size:15px;line-height:15px;color:#000;font-weight:normal;-webkit-text-stroke:0.2px #000">玉蹄</div><div class="t" style="left:356.5px;width:95px;text-align:center;top:486px;font-size:14px;line-height:14px;color:#000;font-weight:normal;-webkit-text-stroke:0.1px #000">1</div><div class="t" style="left:411.5px;width:98px;text-align:center;top:485px;font-size:15px;line-height:15px;color:#000;font-weight:normal;-webkit-text-stroke:0.2px #000">只</div><div class="t" style="left:469.5px;width:124px;text-align:center;top:486px;font-size:14px;line-height:14px;color:#000;font-weight:normal;-webkit-text-stroke:0.1px #000">30533</div><div class="t" style="left:553.5px;width:124px;text-align:center;top:486px;font-size:14px;line-height:14px;color:#000;font-weight:normal;-webkit-text-stroke:0.1px #000">31533</div><div class="t" style="left:637.5px;width:112px;text-align:center;top:486px;font-size:14px;line-height:14px;color:#000;font-weight:normal;-webkit-text-stroke:0.1px #000">3</div><div class="t" style="left:709.5px;width:112px;text-align:center;top:486px;font-size:14px;line-height:14px;color:#000;font-weight:normal;-webkit-text-stroke:0.1px #000">0</div><div class="t" style="left:781.5px;width:112px;text-align:center;top:486px;font-size:14px;line-height:14px;color:#000;font-weight:normal;-webkit-text-stroke:0.1px #000">0</div><div class="t" style="left:853.5px;width:124px;text-align:center;top:486px;font-size:14px;line-height:14px;color:#000;font-weight:normal;-webkit-text-stroke:0.1px #000">1</div><div class="t" style="left:937.5px;width:112px;text-align:center;top:485px;font-size:15px;line-height:15px;color:#000;font-weight:normal;-webkit-text-stroke:0.2px #000">上仙</div><div class="t" style="left:1009.5px;width:112px;text-align:center;top:485px;font-size:15px;line-height:15px;color:#000;font-weight:normal;-webkit-text-stroke:0.2px #000">妖怪</div><div class="t" style="left:1081.5px;width:112px;text-align:center;top:485px;font-size:15px;line-height:15px;color:#000;font-weight:normal;-webkit-text-stroke:0.2px #000">本仙</div><div class="t" style="left:1153.5px;width:112px;text-align:center;top:485px;font-size:15px;line-height:15px;color:#000;font-weight:normal;-webkit-text-stroke:0.2px #000">老妖我</div><div class="t" style="left:1225.5px;width:124px;text-align:center;top:486px;font-size:14px;line-height:14px;color:#000;font-weight:normal;-webkit-text-stroke:0.1px #000">30533</div><div class="t" style="left:1309.5px;width:112px;text-align:center;top:486px;font-size:14px;line-height:14px;color:#000;font-weight:normal;-webkit-text-stroke:0.1px #000">1</div><div class="t" style="left:1381.5px;width:112px;text-align:center;top:486px;font-size:14px;line-height:14px;color:#000;font-weight:normal;-webkit-text-stroke:0.1px #000">7373</div><div class="t" style="left:1453.5px;width:112px;text-align:center;top:486px;font-size:14px;line-height:14px;color:#000;font-weight:normal;-webkit-text-stroke:0.1px #000">5056</div><div class="t" style="left:1525.5px;width:112px;text-align:center;top:486px;font-size:14px;line-height:14px;color:#000;font-weight:normal;-webkit-text-stroke:0.1px #000">1322</div><div class="t" style="left:1597.5px;width:112px;text-align:center;top:486px;font-size:14px;line-height:14px;color:#000;font-weight:normal;-webkit-text-stroke:0.1px #000">581</div><div class="t" style="left:1669.5px;width:112px;text-align:center;top:486px;font-size:14px;line-height:14px;color:#000;font-weight:normal;-webkit-text-stroke:0.1px #000">275</div><div class="t" style="left:1741.5px;width:112px;text-align:center;top:486px;font-size:14px;line-height:14px;color:#000;font-weight:normal;-webkit-text-stroke:0.1px #000">3</div><div class="t" style="left:1813.5px;width:112px;text-align:center;top:486px;font-size:14px;line-height:14px;color:#000;font-weight:normal;-webkit-text-stroke:0.1px #000">25375</div><div class="t" style="left:4.5px;width:149px;text-align:center;top:514px;font-size:15px;line-height:15px;color:#000;font-weight:normal;-webkit-text-stroke:0.2px #000">飞空鱼</div><div class="t" style="left:113.5px;width:182px;text-align:center;top:515px;font-size:14px;line-height:14px;color:#000;font-weight:normal;-webkit-text-stroke:0.1px #000">feikongyu</div><div class="t" style="left:255.5px;width:141px;text-align:center;top:514px;font-size:15px;line-height:15px;color:#000;font-weight:normal;-webkit-text-stroke:0.2px #000">飞空鱼</div><div class="t" style="left:356.5px;width:95px;text-align:center;top:515px;font-size:14px;line-height:14px;color:#000;font-weight:normal;-webkit-text-stroke:0.1px #000">1</div><div class="t" style="left:411.5px;width:98px;text-align:center;top:514px;font-size:15px;line-height:15px;color:#000;font-weight:normal;-webkit-text-stroke:0.2px #000">条</div><div class="t" style="left:469.5px;width:124px;text-align:center;top:515px;font-size:14px;line-height:14px;color:#000;font-weight:normal;-webkit-text-stroke:0.1px #000">30524</div><div class="t" style="left:553.5px;width:124px;text-align:center;top:515px;font-size:14px;line-height:14px;color:#000;font-weight:normal;-webkit-text-stroke:0.1px #000">31524</div><div class="t" style="left:637.5px;width:112px;text-align:center;top:515px;font-size:14px;line-height:14px;color:#000;font-weight:normal;-webkit-text-stroke:0.1px #000">3</div><div class="t" style="left:709.5px;width:112px;text-align:center;top:515px;font-size:14px;line-height:14px;color:#000;font-weight:normal;-webkit-text-stroke:0.1px #000">0</div><div class="t" style="left:781.5px;width:112px;text-align:center;top:515px;font-size:14px;line-height:14px;color:#000;font-weight:normal;-webkit-text-stroke:0.1px #000">0</div><div class="t" style="left:853.5px;width:124px;text-align:center;top:515px;font-size:14px;line-height:14px;color:#000;font-weight:normal;-webkit-text-stroke:0.1px #000">1</div><div class="t" style="left:937.5px;width:112px;text-align:center;top:514px;font-size:15px;line-height:15px;color:#000;font-weight:normal;-webkit-text-stroke:0.2px #000">上仙</div><div class="t" style="left:1009.5px;width:112px;text-align:center;top:514px;font-size:15px;line-height:15px;color:#000;font-weight:normal;-webkit-text-stroke:0.2px #000">妖怪</div><div class="t" style="left:1081.5px;width:112px;text-align:center;top:514px;font-size:15px;line-height:15px;color:#000;font-weight:normal;-webkit-text-stroke:0.2px #000">本仙</div><div class="t" style="left:1153.5px;width:112px;text-align:center;top:514px;font-size:15px;line-height:15px;color:#000;font-weight:normal;-webkit-text-stroke:0.2px #000">老妖我</div><div class="t" style="left:1225.5px;width:124px;text-align:center;top:515px;font-size:14px;line-height:14px;color:#000;font-weight:normal;-webkit-text-stroke:0.1px #000">30524</div><div class="t" style="left:1309.5px;width:112px;text-align:center;top:515px;font-size:14px;line-height:14px;color:#000;font-weight:normal;-webkit-text-stroke:0.1px #000">1</div><div class="t" style="left:1381.5px;width:112px;text-align:center;top:515px;font-size:14px;line-height:14px;color:#000;font-weight:normal;-webkit-text-stroke:0.1px #000">7373</div><div class="t" style="left:1453.5px;width:112px;text-align:center;top:515px;font-size:14px;line-height:14px;color:#000;font-weight:normal;-webkit-text-stroke:0.1px #000">5056</div><div class="t" style="left:1525.5px;width:112px;text-align:center;top:515px;font-size:14px;line-height:14px;color:#000;font-weight:normal;-webkit-text-stroke:0.1px #000">1322</div><div class="t" style="left:1597.5px;width:112px;text-align:center;top:515px;font-size:14px;line-height:14px;color:#000;font-weight:normal;-webkit-text-stroke:0.1px #000">581</div><div class="t" style="left:1669.5px;width:112px;text-align:center;top:515px;font-size:14px;line-height:14px;color:#000;font-weight:normal;-webkit-text-stroke:0.1px #000">275</div><div class="t" style="left:1741.5px;width:112px;text-align:center;top:515px;font-size:14px;line-height:14px;color:#000;font-weight:normal;-webkit-text-stroke:0.1px #000">2</div><div class="t" style="left:1813.5px;width:112px;text-align:center;top:515px;font-size:14px;line-height:14px;color:#000;font-weight:normal;-webkit-text-stroke:0.1px #000">25375</div><div class="t" style="left:4.5px;width:149px;text-align:center;top:543px;font-size:15px;line-height:15px;color:#000;font-weight:normal;-webkit-text-stroke:0.2px #000">驰焰鱼</div><div class="t" style="left:113.5px;width:182px;text-align:center;top:544px;font-size:14px;line-height:14px;color:#000;font-weight:normal;-webkit-text-stroke:0.1px #000">chiyanyu</div><div class="t" style="left:255.5px;width:141px;text-align:center;top:543px;font-size:15px;line-height:15px;color:#000;font-weight:normal;-webkit-text-stroke:0.2px #000">驰焰鱼</div><div class="t" style="left:356.5px;width:95px;text-align:center;top:544px;font-size:14px;line-height:14px;color:#000;font-weight:normal;-webkit-text-stroke:0.1px #000">1</div><div class="t" style="left:411.5px;width:98px;text-align:center;top:543px;font-size:15px;line-height:15px;color:#000;font-weight:normal;-webkit-text-stroke:0.2px #000">条</div><div class="t" style="left:469.5px;width:124px;text-align:center;top:544px;font-size:14px;line-height:14px;color:#000;font-weight:normal;-webkit-text-stroke:0.1px #000">30525</div><div class="t" style="left:553.5px;width:124px;text-align:center;top:544px;font-size:14px;line-height:14px;color:#000;font-weight:normal;-webkit-text-stroke:0.1px #000">31525</div><div class="t" style="left:637.5px;width:112px;text-align:center;top:544px;font-size:14px;line-height:14px;color:#000;font-weight:normal;-webkit-text-stroke:0.1px #000">3</div><div class="t" style="left:709.5px;width:112px;text-align:center;top:544px;font-size:14px;line-height:14px;color:#000;font-weight:normal;-webkit-text-stroke:0.1px #000">0</div><div class="t" style="left:781.5px;width:112px;text-align:center;top:544px;font-size:14px;line-height:14px;color:#000;font-weight:normal;-webkit-text-stroke:0.1px #000">0</div><div class="t" style="left:853.5px;width:124px;text-align:center;top:544px;font-size:14px;line-height:14px;color:#000;font-weight:normal;-webkit-text-stroke:0.1px #000">1</div><div class="t" style="left:937.5px;width:112px;text-align:center;top:543px;font-size:15px;line-height:15px;color:#000;font-weight:normal;-webkit-text-stroke:0.2px #000">上仙</div><div class="t" style="left:1009.5px;width:112px;text-align:center;top:543px;font-size:15px;line-height:15px;color:#000;font-weight:normal;-webkit-text-stroke:0.2px #000">妖怪</div><div class="t" style="left:1081.5px;width:112px;text-align:center;top:543px;font-size:15px;line-height:15px;color:#000;font-weight:normal;-webkit-text-stroke:0.2px #000">本仙</div><div class="t" style="left:1153.5px;width:112px;text-align:center;top:543px;font-size:15px;line-height:15px;color:#000;font-weight:normal;-webkit-text-stroke:0.2px #000">老妖我</div><div class="t" style="left:1225.5px;width:124px;text-align:center;top:544px;font-size:14px;line-height:14px;color:#000;font-weight:normal;-webkit-text-stroke:0.1px #000">30525</div><div class="t" style="left:1309.5px;width:112px;text-align:center;top:544px;font-size:14px;line-height:14px;color:#000;font-weight:normal;-webkit-text-stroke:0.1px #000">1</div><div class="t" style="left:1381.5px;width:112px;text-align:center;top:544px;font-size:14px;line-height:14px;color:#000;font-weight:normal;-webkit-text-stroke:0.1px #000">7373</div><div class="t" style="left:1453.5px;width:112px;text-align:center;top:544px;font-size:14px;line-height:14px;color:#000;font-weight:normal;-webkit-text-stroke:0.1px #000">5056</div><div class="t" style="left:1525.5px;width:112px;text-align:center;top:544px;font-size:14px;line-height:14px;color:#000;font-weight:normal;-webkit-text-stroke:0.1px #000">1322</div><div class="t" style="left:1597.5px;width:112px;text-align:center;top:544px;font-size:14px;line-height:14px;color:#000;font-weight:normal;-webkit-text-stroke:0.1px #000">581</div><div class="t" style="left:1669.5px;width:112px;text-align:center;top:544px;font-size:14px;line-height:14px;color:#000;font-weight:normal;-webkit-text-stroke:0.1px #000">275</div><div class="t" style="left:1741.5px;width:112px;text-align:center;top:544px;font-size:14px;line-height:14px;color:#000;font-weight:normal;-webkit-text-stroke:0.1px #000">4</div><div class="t" style="left:1813.5px;width:112px;text-align:center;top:544px;font-size:14px;line-height:14px;color:#000;font-weight:normal;-webkit-text-stroke:0.1px #000">25375</div><div class="t" style="left:4.5px;width:149px;text-align:center;top:572px;font-size:15px;line-height:15px;color:#000;font-weight:normal;-webkit-text-stroke:0.2px #000">寒冰鱼</div><div class="t" style="left:113.5px;width:182px;text-align:center;top:573px;font-size:14px;line-height:14px;color:#000;font-weight:normal;-webkit-text-stroke:0.1px #000">hanbingyu</div><div class="t" style="left:255.5px;width:141px;text-align:center;top:572px;font-size:15px;line-height:15px;color:#000;font-weight:normal;-webkit-text-stroke:0.2px #000">寒冰鱼</div><div class="t" style="left:356.5px;width:95px;text-align:center;top:573px;font-size:14px;line-height:14px;color:#000;font-weight:normal;-webkit-text-stroke:0.1px #000">1</div><div class="t" style="left:411.5px;width:98px;text-align:center;top:572px;font-size:15px;line-height:15px;color:#000;font-weight:normal;-webkit-text-stroke:0.2px #000">条</div><div class="t" style="left:469.5px;width:124px;text-align:center;top:573px;font-size:14px;line-height:14px;color:#000;font-weight:normal;-webkit-text-stroke:0.1px #000">30522</div><div class="t" style="left:553.5px;width:124px;text-align:center;top:573px;font-size:14px;line-height:14px;color:#000;font-weight:normal;-webkit-text-stroke:0.1px #000">31522</div><div class="t" style="left:637.5px;width:112px;text-align:center;top:573px;font-size:14px;line-height:14px;color:#000;font-weight:normal;-webkit-text-stroke:0.1px #000">3</div><div class="t" style="left:709.5px;width:112px;text-align:center;top:573px;font-size:14px;line-height:14px;color:#000;font-weight:normal;-webkit-text-stroke:0.1px #000">0</div><div class="t" style="left:781.5px;width:112px;text-align:center;top:573px;font-size:14px;line-height:14px;color:#000;font-weight:normal;-webkit-text-stroke:0.1px #000">0</div><div class="t" style="left:853.5px;width:124px;text-align:center;top:573px;font-size:14px;line-height:14px;color:#000;font-weight:normal;-webkit-text-stroke:0.1px #000">1</div><div class="t" style="left:937.5px;width:112px;text-align:center;top:572px;font-size:15px;line-height:15px;color:#000;font-weight:normal;-webkit-text-stroke:0.2px #000">上仙</div><div class="t" style="left:1009.5px;width:112px;text-align:center;top:572px;font-size:15px;line-height:15px;color:#000;font-weight:normal;-webkit-text-stroke:0.2px #000">妖怪</div><div class="t" style="left:1081.5px;width:112px;text-align:center;top:572px;font-size:15px;line-height:15px;color:#000;font-weight:normal;-webkit-text-stroke:0.2px #000">本仙</div><div class="t" style="left:1153.5px;width:112px;text-align:center;top:572px;font-size:15px;line-height:15px;color:#000;font-weight:normal;-webkit-text-stroke:0.2px #000">老妖我</div><div class="t" style="left:1225.5px;width:124px;text-align:center;top:573px;font-size:14px;line-height:14px;color:#000;font-weight:normal;-webkit-text-stroke:0.1px #000">30522</div><div class="t" style="left:1309.5px;width:112px;text-align:center;top:573px;font-size:14px;line-height:14px;color:#000;font-weight:normal;-webkit-text-stroke:0.1px #000">1</div><div class="t" style="left:1381.5px;width:112px;text-align:center;top:573px;font-size:14px;line-height:14px;color:#000;font-weight:normal;-webkit-text-stroke:0.1px #000">7373</div><div class="t" style="left:1453.5px;width:112px;text-align:center;top:573px;font-size:14px;line-height:14px;color:#000;font-weight:normal;-webkit-text-stroke:0.1px #000">5056</div><div class="t" style="left:1525.5px;width:112px;text-align:center;top:573px;font-size:14px;line-height:14px;color:#000;font-weight:normal;-webkit-text-stroke:0.1px #000">1322</div><div class="t" style="left:1597.5px;width:112px;text-align:center;top:573px;font-size:14px;line-height:14px;color:#000;font-weight:normal;-webkit-text-stroke:0.1px #000">581</div><div class="t" style="left:1669.5px;width:112px;text-align:center;top:573px;font-size:14px;line-height:14px;color:#000;font-weight:normal;-webkit-text-stroke:0.1px #000">275</div><div class="t" style="left:1741.5px;width:112px;text-align:center;top:573px;font-size:14px;line-height:14px;color:#000;font-weight:normal;-webkit-text-stroke:0.1px #000">3</div><div class="t" style="left:1813.5px;width:112px;text-align:center;top:573px;font-size:14px;line-height:14px;color:#000;font-weight:normal;-webkit-text-stroke:0.1px #000">25375</div><div class="t" style="left:4.5px;width:149px;text-align:center;top:601px;font-size:15px;line-height:15px;color:#000;font-weight:normal;-webkit-text-stroke:0.2px #000">威震鱼</div><div class="t" style="left:113.5px;width:182px;text-align:center;top:602px;font-size:14px;line-height:14px;color:#000;font-weight:normal;-webkit-text-stroke:0.1px #000">weizhenyu</div><div class="t" style="left:255.5px;width:141px;text-align:center;top:601px;font-size:15px;line-height:15px;color:#000;font-weight:normal;-webkit-text-stroke:0.2px #000">威震鱼</div><div class="t" style="left:356.5px;width:95px;text-align:center;top:602px;font-size:14px;line-height:14px;color:#000;font-weight:normal;-webkit-text-stroke:0.1px #000">1</div><div class="t" style="left:411.5px;width:98px;text-align:center;top:601px;font-size:15px;line-height:15px;color:#000;font-weight:normal;-webkit-text-stroke:0.2px #000">条</div><div class="t" style="left:469.5px;width:124px;text-align:center;top:602px;font-size:14px;line-height:14px;color:#000;font-weight:normal;-webkit-text-stroke:0.1px #000">30526</div><div class="t" style="left:553.5px;width:124px;text-align:center;top:602px;font-size:14px;line-height:14px;color:#000;font-weight:normal;-webkit-text-stroke:0.1px #000">31526</div><div class="t" style="left:637.5px;width:112px;text-align:center;top:602px;font-size:14px;line-height:14px;color:#000;font-weight:normal;-webkit-text-stroke:0.1px #000">3</div><div class="t" style="left:709.5px;width:112px;text-align:center;top:602px;font-size:14px;line-height:14px;color:#000;font-weight:normal;-webkit-text-stroke:0.1px #000">0</div><div class="t" style="left:781.5px;width:112px;text-align:center;top:602px;font-size:14px;line-height:14px;color:#000;font-weight:normal;-webkit-text-stroke:0.1px #000">0</div><div class="t" style="left:853.5px;width:124px;text-align:center;top:602px;font-size:14px;line-height:14px;color:#000;font-weight:normal;-webkit-text-stroke:0.1px #000">1</div><div class="t" style="left:937.5px;width:112px;text-align:center;top:601px;font-size:15px;line-height:15px;color:#000;font-weight:normal;-webkit-text-stroke:0.2px #000">上仙</div><div class="t" style="left:1009.5px;width:112px;text-align:center;top:601px;font-size:15px;line-height:15px;color:#000;font-weight:normal;-webkit-text-stroke:0.2px #000">妖怪</div><div class="t" style="left:1081.5px;width:112px;text-align:center;top:601px;font-size:15px;line-height:15px;color:#000;font-weight:normal;-webkit-text-stroke:0.2px #000">本仙</div><div class="t" style="left:1153.5px;width:112px;text-align:center;top:601px;font-size:15px;line-height:15px;color:#000;font-weight:normal;-webkit-text-stroke:0.2px #000">老妖我</div><div class="t" style="left:1225.5px;width:124px;text-align:center;top:602px;font-size:14px;line-height:14px;color:#000;font-weight:normal;-webkit-text-stroke:0.1px #000">30526</div><div class="t" style="left:1309.5px;width:112px;text-align:center;top:602px;font-size:14px;line-height:14px;color:#000;font-weight:normal;-webkit-text-stroke:0.1px #000">1</div><div class="t" style="left:1381.5px;width:112px;text-align:center;top:602px;font-size:14px;line-height:14px;color:#000;font-weight:normal;-webkit-text-stroke:0.1px #000">7373</div><div class="t" style="left:1453.5px;width:112px;text-align:center;top:602px;font-size:14px;line-height:14px;color:#000;font-weight:normal;-webkit-text-stroke:0.1px #000">5056</div><div class="t" style="left:1525.5px;width:112px;text-align:center;top:602px;font-size:14px;line-height:14px;color:#000;font-weight:normal;-webkit-text-stroke:0.1px #000">1322</div><div class="t" style="left:1597.5px;width:112px;text-align:center;top:602px;font-size:14px;line-height:14px;color:#000;font-weight:normal;-webkit-text-stroke:0.1px #000">581</div><div class="t" style="left:1669.5px;width:112px;text-align:center;top:602px;font-size:14px;line-height:14px;color:#000;font-weight:normal;-webkit-text-stroke:0.1px #000">275</div><div class="t" style="left:1741.5px;width:112px;text-align:center;top:602px;font-size:14px;line-height:14px;color:#000;font-weight:normal;-webkit-text-stroke:0.1px #000">1</div><div class="t" style="left:1813.5px;width:112px;text-align:center;top:602px;font-size:14px;line-height:14px;color:#000;font-weight:normal;-webkit-text-stroke:0.1px #000">25375</div><div class="t" style="left:4.5px;width:149px;text-align:center;top:630px;font-size:15px;line-height:15px;color:#000;font-weight:normal;-webkit-text-stroke:0.2px #000">玉蝶鱼</div><div class="t" style="left:113.5px;width:182px;text-align:center;top:631px;font-size:14px;line-height:14px;color:#000;font-weight:normal;-webkit-text-stroke:0.1px #000">yudieyu</div><div class="t" style="left:255.5px;width:141px;text-align:center;top:630px;font-size:15px;line-height:15px;color:#000;font-weight:normal;-webkit-text-stroke:0.2px #000">玉蝶鱼</div><div class="t" style="left:356.5px;width:95px;text-align:center;top:631px;font-size:14px;line-height:14px;color:#000;font-weight:normal;-webkit-text-stroke:0.1px #000">1</div><div class="t" style="left:411.5px;width:98px;text-align:center;top:630px;font-size:15px;line-height:15px;color:#000;font-weight:normal;-webkit-text-stroke:0.2px #000">条</div><div class="t" style="left:469.5px;width:124px;text-align:center;top:631px;font-size:14px;line-height:14px;color:#000;font-weight:normal;-webkit-text-stroke:0.1px #000">30523</div><div class="t" style="left:553.5px;width:124px;text-align:center;top:631px;font-size:14px;line-height:14px;color:#000;font-weight:normal;-webkit-text-stroke:0.1px #000">31523</div><div class="t" style="left:637.5px;width:112px;text-align:center;top:631px;font-size:14px;line-height:14px;color:#000;font-weight:normal;-webkit-text-stroke:0.1px #000">3</div><div class="t" style="left:709.5px;width:112px;text-align:center;top:631px;font-size:14px;line-height:14px;color:#000;font-weight:normal;-webkit-text-stroke:0.1px #000">0</div><div class="t" style="left:781.5px;width:112px;text-align:center;top:631px;font-size:14px;line-height:14px;color:#000;font-weight:normal;-webkit-text-stroke:0.1px #000">0</div><div class="t" style="left:853.5px;width:124px;text-align:center;top:631px;font-size:14px;line-height:14px;color:#000;font-weight:normal;-webkit-text-stroke:0.1px #000">1</div><div class="t" style="left:937.5px;width:112px;text-align:center;top:630px;font-size:15px;line-height:15px;color:#000;font-weight:normal;-webkit-text-stroke:0.2px #000">上仙</div><div class="t" style="left:1009.5px;width:112px;text-align:center;top:630px;font-size:15px;line-height:15px;color:#000;font-weight:normal;-webkit-text-stroke:0.2px #000">妖怪</div><div class="t" style="left:1081.5px;width:112px;text-align:center;top:630px;font-size:15px;line-height:15px;color:#000;font-weight:normal;-webkit-text-stroke:0.2px #000">本仙</div><div class="t" style="left:1153.5px;width:112px;text-align:center;top:630px;font-size:15px;line-height:15px;color:#000;font-weight:normal;-webkit-text-stroke:0.2px #000">老妖我</div><div class="t" style="left:1225.5px;width:124px;text-align:center;top:631px;font-size:14px;line-height:14px;color:#000;font-weight:normal;-webkit-text-stroke:0.1px #000">30523</div><div class="t" style="left:1309.5px;width:112px;text-align:center;top:631px;font-size:14px;line-height:14px;color:#000;font-weight:normal;-webkit-text-stroke:0.1px #000">1</div><div class="t" style="left:1381.5px;width:112px;text-align:center;top:631px;font-size:14px;line-height:14px;color:#000;font-weight:normal;-webkit-text-stroke:0.1px #000">7373</div><div class="t" style="left:1453.5px;width:112px;text-align:center;top:631px;font-size:14px;line-height:14px;color:#000;font-weight:normal;-webkit-text-stroke:0.1px #000">5056</div><div class="t" style="left:1525.5px;width:112px;text-align:center;top:631px;font-size:14px;line-height:14px;color:#000;font-weight:normal;-webkit-text-stroke:0.1px #000">1322</div><div class="t" style="left:1597.5px;width:112px;text-align:center;top:631px;font-size:14px;line-height:14px;color:#000;font-weight:normal;-webkit-text-stroke:0.1px #000">581</div><div class="t" style="left:1669.5px;width:112px;text-align:center;top:631px;font-size:14px;line-height:14px;color:#000;font-weight:normal;-webkit-text-stroke:0.1px #000">275</div><div class="t" style="left:1741.5px;width:112px;text-align:center;top:631px;font-size:14px;line-height:14px;color:#000;font-weight:normal;-webkit-text-stroke:0.1px #000">5</div><div class="t" style="left:1813.5px;width:112px;text-align:center;top:631px;font-size:14px;line-height:14px;color:#000;font-weight:normal;-webkit-text-stroke:0.1px #000">25375</div><div class="t" style="left:4.5px;width:149px;text-align:center;top:659px;font-size:15px;line-height:15px;color:#000;font-weight:normal;-webkit-text-stroke:0.2px #000">巨掌猿</div><div class="t" style="left:113.5px;width:182px;text-align:center;top:660px;font-size:14px;line-height:14px;color:#000;font-weight:normal;-webkit-text-stroke:0.1px #000">juzhangyuan</div><div class="t" style="left:255.5px;width:141px;text-align:center;top:659px;font-size:15px;line-height:15px;color:#000;font-weight:normal;-webkit-text-stroke:0.2px #000">巨掌猿</div><div class="t" style="left:356.5px;width:95px;text-align:center;top:660px;font-size:14px;line-height:14px;color:#000;font-weight:normal;-webkit-text-stroke:0.1px #000">1</div><div class="t" style="left:411.5px;width:98px;text-align:center;top:659px;font-size:15px;line-height:15px;color:#000;font-weight:normal;-webkit-text-stroke:0.2px #000">只</div><div class="t" style="left:469.5px;width:124px;text-align:center;top:660px;font-size:14px;line-height:14px;color:#000;font-weight:normal;-webkit-text-stroke:0.1px #000">30529</div><div class="t" style="left:553.5px;width:124px;text-align:center;top:660px;font-size:14px;line-height:14px;color:#000;font-weight:normal;-webkit-text-stroke:0.1px #000">31529</div><div class="t" style="left:637.5px;width:112px;text-align:center;top:660px;font-size:14px;line-height:14px;color:#000;font-weight:normal;-webkit-text-stroke:0.1px #000">3</div><div class="t" style="left:709.5px;width:112px;text-align:center;top:660px;font-size:14px;line-height:14px;color:#000;font-weight:normal;-webkit-text-stroke:0.1px #000">0</div><div class="t" style="left:781.5px;width:112px;text-align:center;top:660px;font-size:14px;line-height:14px;color:#000;font-weight:normal;-webkit-text-stroke:0.1px #000">0</div><div class="t" style="left:853.5px;width:124px;text-align:center;top:660px;font-size:14px;line-height:14px;color:#000;font-weight:normal;-webkit-text-stroke:0.1px #000">1</div><div class="t" style="left:937.5px;width:112px;text-align:center;top:659px;font-size:15px;line-height:15px;color:#000;font-weight:normal;-webkit-text-stroke:0.2px #000">上仙</div><div class="t" style="left:1009.5px;width:112px;text-align:center;top:659px;font-size:15px;line-height:15px;color:#000;font-weight:normal;-webkit-text-stroke:0.2px #000">妖怪</div><div class="t" style="left:1081.5px;width:112px;text-align:center;top:659px;font-size:15px;line-height:15px;color:#000;font-weight:normal;-webkit-text-stroke:0.2px #000">本仙</div><div class="t" style="left:1153.5px;width:112px;text-align:center;top:659px;font-size:15px;line-height:15px;color:#000;font-weight:normal;-webkit-text-stroke:0.2px #000">老妖我</div><div class="t" style="left:1225.5px;width:124px;text-align:center;top:660px;font-size:14px;line-height:14px;color:#000;font-weight:normal;-webkit-text-stroke:0.1px #000">30529</div><div class="t" style="left:1309.5px;width:112px;text-align:center;top:660px;font-size:14px;line-height:14px;color:#000;font-weight:normal;-webkit-text-stroke:0.1px #000">1</div><div class="t" style="left:1381.5px;width:112px;text-align:center;top:660px;font-size:14px;line-height:14px;color:#000;font-weight:normal;-webkit-text-stroke:0.1px #000">7373</div><div class="t" style="left:1453.5px;width:112px;text-align:center;top:660px;font-size:14px;line-height:14px;color:#000;font-weight:normal;-webkit-text-stroke:0.1px #000">5056</div><div class="t" style="left:1525.5px;width:112px;text-align:center;top:660px;font-size:14px;line-height:14px;color:#000;font-weight:normal;-webkit-text-stroke:0.1px #000">1322</div><div class="t" style="left:1597.5px;width:112px;text-align:center;top:660px;font-size:14px;line-height:14px;color:#000;font-weight:normal;-webkit-text-stroke:0.1px #000">581</div><div class="t" style="left:1669.5px;width:112px;text-align:center;top:660px;font-size:14px;line-height:14px;color:#000;font-weight:normal;-webkit-text-stroke:0.1px #000">275</div><div class="t" style="left:1741.5px;width:112px;text-align:center;top:660px;font-size:14px;line-height:14px;color:#000;font-weight:normal;-webkit-text-stroke:0.1px #000">3</div><div class="t" style="left:1813.5px;width:112px;text-align:center;top:660px;font-size:14px;line-height:14px;color:#000;font-weight:normal;-webkit-text-stroke:0.1px #000">25375</div><div class="t" style="left:4.5px;width:149px;text-align:center;top:688px;font-size:15px;line-height:15px;color:#000;font-weight:normal;-webkit-text-stroke:0.2px #000">开山猿</div><div class="t" style="left:113.5px;width:182px;text-align:center;top:689px;font-size:14px;line-height:14px;color:#000;font-weight:normal;-webkit-text-stroke:0.1px #000">kaishanyuan</div><div class="t" style="left:255.5px;width:141px;text-align:center;top:688px;font-size:15px;line-height:15px;color:#000;font-weight:normal;-webkit-text-stroke:0.2px #000">开山猿</div><div class="t" style="left:356.5px;width:95px;text-align:center;top:689px;font-size:14px;line-height:14px;color:#000;font-weight:normal;-webkit-text-stroke:0.1px #000">1</div><div class="t" style="left:411.5px;width:98px;text-align:center;top:688px;font-size:15px;line-height:15px;color:#000;font-weight:normal;-webkit-text-stroke:0.2px #000">只</div><div class="t" style="left:469.5px;width:124px;text-align:center;top:689px;font-size:14px;line-height:14px;color:#000;font-weight:normal;-webkit-text-stroke:0.1px #000">30531</div><div class="t" style="left:553.5px;width:124px;text-align:center;top:689px;font-size:14px;line-height:14px;color:#000;font-weight:normal;-webkit-text-stroke:0.1px #000">31531</div><div class="t" style="left:637.5px;width:112px;text-align:center;top:689px;font-size:14px;line-height:14px;color:#000;font-weight:normal;-webkit-text-stroke:0.1px #000">3</div><div class="t" style="left:709.5px;width:112px;text-align:center;top:689px;font-size:14px;line-height:14px;color:#000;font-weight:normal;-webkit-text-stroke:0.1px #000">0</div><div class="t" style="left:781.5px;width:112px;text-align:center;top:689px;font-size:14px;line-height:14px;color:#000;font-weight:normal;-webkit-text-stroke:0.1px #000">0</div><div class="t" style="left:853.5px;width:124px;text-align:center;top:689px;font-size:14px;line-height:14px;color:#000;font-weight:normal;-webkit-text-stroke:0.1px #000">1</div><div class="t" style="left:937.5px;width:112px;text-align:center;top:688px;font-size:15px;line-height:15px;color:#000;font-weight:normal;-webkit-text-stroke:0.2px #000">上仙</div><div class="t" style="left:1009.5px;width:112px;text-align:center;top:688px;font-size:15px;line-height:15px;color:#000;font-weight:normal;-webkit-text-stroke:0.2px #000">妖怪</div><div class="t" style="left:1081.5px;width:112px;text-align:center;top:688px;font-size:15px;line-height:15px;color:#000;font-weight:normal;-webkit-text-stroke:0.2px #000">本仙</div><div class="t" style="left:1153.5px;width:112px;text-align:center;top:688px;font-size:15px;line-height:15px;color:#000;font-weight:normal;-webkit-text-stroke:0.2px #000">老妖我</div><div class="t" style="left:1225.5px;width:124px;text-align:center;top:689px;font-size:14px;line-height:14px;color:#000;font-weight:normal;-webkit-text-stroke:0.1px #000">30531</div><div class="t" style="left:1309.5px;width:112px;text-align:center;top:689px;font-size:14px;line-height:14px;color:#000;font-weight:normal;-webkit-text-stroke:0.1px #000">1</div><div class="t" style="left:1381.5px;width:112px;text-align:center;top:689px;font-size:14px;line-height:14px;color:#000;font-weight:normal;-webkit-text-stroke:0.1px #000">7373</div><div class="t" style="left:1453.5px;width:112px;text-align:center;top:689px;font-size:14px;line-height:14px;color:#000;font-weight:normal;-webkit-text-stroke:0.1px #000">5056</div><div class="t" style="left:1525.5px;width:112px;text-align:center;top:689px;font-size:14px;line-height:14px;color:#000;font-weight:normal;-webkit-text-stroke:0.1px #000">1322</div><div class="t" style="left:1597.5px;width:112px;text-align:center;top:689px;font-size:14px;line-height:14px;color:#000;font-weight:normal;-webkit-text-stroke:0.1px #000">581</div><div class="t" style="left:1669.5px;width:112px;text-align:center;top:689px;font-size:14px;line-height:14px;color:#000;font-weight:normal;-webkit-text-stroke:0.1px #000">275</div><div class="t" style="left:1741.5px;width:112px;text-align:center;top:689px;font-size:14px;line-height:14px;color:#000;font-weight:normal;-webkit-text-stroke:0.1px #000">5</div><div class="t" style="left:1813.5px;width:112px;text-align:center;top:689px;font-size:14px;line-height:14px;color:#000;font-weight:normal;-webkit-text-stroke:0.1px #000">25375</div><div class="t" style="left:4.5px;width:149px;text-align:center;top:717px;font-size:15px;line-height:15px;color:#000;font-weight:normal;-webkit-text-stroke:0.2px #000">裂石猿</div><div class="t" style="left:113.5px;width:182px;text-align:center;top:718px;font-size:14px;line-height:14px;color:#000;font-weight:normal;-webkit-text-stroke:0.1px #000">lieshiyuan</div><div class="t" style="left:255.5px;width:141px;text-align:center;top:717px;font-size:15px;line-height:15px;color:#000;font-weight:normal;-webkit-text-stroke:0.2px #000">裂石猿</div><div class="t" style="left:356.5px;width:95px;text-align:center;top:718px;font-size:14px;line-height:14px;color:#000;font-weight:normal;-webkit-text-stroke:0.1px #000">1</div><div class="t" style="left:411.5px;width:98px;text-align:center;top:717px;font-size:15px;line-height:15px;color:#000;font-weight:normal;-webkit-text-stroke:0.2px #000">只</div><div class="t" style="left:469.5px;width:124px;text-align:center;top:718px;font-size:14px;line-height:14px;color:#000;font-weight:normal;-webkit-text-stroke:0.1px #000">30527</div><div class="t" style="left:553.5px;width:124px;text-align:center;top:718px;font-size:14px;line-height:14px;color:#000;font-weight:normal;-webkit-text-stroke:0.1px #000">31527</div><div class="t" style="left:637.5px;width:112px;text-align:center;top:718px;font-size:14px;line-height:14px;color:#000;font-weight:normal;-webkit-text-stroke:0.1px #000">3</div><div class="t" style="left:709.5px;width:112px;text-align:center;top:718px;font-size:14px;line-height:14px;color:#000;font-weight:normal;-webkit-text-stroke:0.1px #000">0</div><div class="t" style="left:781.5px;width:112px;text-align:center;top:718px;font-size:14px;line-height:14px;color:#000;font-weight:normal;-webkit-text-stroke:0.1px #000">0</div><div class="t" style="left:853.5px;width:124px;text-align:center;top:718px;font-size:14px;line-height:14px;color:#000;font-weight:normal;-webkit-text-stroke:0.1px #000">1</div><div class="t" style="left:937.5px;width:112px;text-align:center;top:717px;font-size:15px;line-height:15px;color:#000;font-weight:normal;-webkit-text-stroke:0.2px #000">上仙</div><div class="t" style="left:1009.5px;width:112px;text-align:center;top:717px;font-size:15px;line-height:15px;color:#000;font-weight:normal;-webkit-text-stroke:0.2px #000">妖怪</div><div class="t" style="left:1081.5px;width:112px;text-align:center;top:717px;font-size:15px;line-height:15px;color:#000;font-weight:normal;-webkit-text-stroke:0.2px #000">本仙</div><div class="t" style="left:1153.5px;width:112px;text-align:center;top:717px;font-size:15px;line-height:15px;color:#000;font-weight:normal;-webkit-text-stroke:0.2px #000">老妖我</div><div class="t" style="left:1225.5px;width:124px;text-align:center;top:718px;font-size:14px;line-height:14px;color:#000;font-weight:normal;-webkit-text-stroke:0.1px #000">30527</div><div class="t" style="left:1309.5px;width:112px;text-align:center;top:718px;font-size:14px;line-height:14px;color:#000;font-weight:normal;-webkit-text-stroke:0.1px #000">1</div><div class="t" style="left:1381.5px;width:112px;text-align:center;top:718px;font-size:14px;line-height:14px;color:#000;font-weight:normal;-webkit-text-stroke:0.1px #000">7373</div><div class="t" style="left:1453.5px;width:112px;text-align:center;top:718px;font-size:14px;line-height:14px;color:#000;font-weight:normal;-webkit-text-stroke:0.1px #000">5056</div><div class="t" style="left:1525.5px;width:112px;text-align:center;top:718px;font-size:14px;line-height:14px;color:#000;font-weight:normal;-webkit-text-stroke:0.1px #000">1322</div><div class="t" style="left:1597.5px;width:112px;text-align:center;top:718px;font-size:14px;line-height:14px;color:#000;font-weight:normal;-webkit-text-stroke:0.1px #000">581</div><div class="t" style="left:1669.5px;width:112px;text-align:center;top:718px;font-size:14px;line-height:14px;color:#000;font-weight:normal;-webkit-text-stroke:0.1px #000">275</div><div class="t" style="left:1741.5px;width:112px;text-align:center;top:718px;font-size:14px;line-height:14px;color:#000;font-weight:normal;-webkit-text-stroke:0.1px #000">2</div><div class="t" style="left:1813.5px;width:112px;text-align:center;top:718px;font-size:14px;line-height:14px;color:#000;font-weight:normal;-webkit-text-stroke:0.1px #000">25375</div><div class="t" style="left:4.5px;width:149px;text-align:center;top:746px;font-size:15px;line-height:15px;color:#000;font-weight:normal;-webkit-text-stroke:0.2px #000">熔岩猿</div><div class="t" style="left:113.5px;width:182px;text-align:center;top:747px;font-size:14px;line-height:14px;color:#000;font-weight:normal;-webkit-text-stroke:0.1px #000">rongyanyuan</div><div class="t" style="left:255.5px;width:141px;text-align:center;top:746px;font-size:15px;line-height:15px;color:#000;font-weight:normal;-webkit-text-stroke:0.2px #000">熔岩猿</div><div class="t" style="left:356.5px;width:95px;text-align:center;top:747px;font-size:14px;line-height:14px;color:#000;font-weight:normal;-webkit-text-stroke:0.1px #000">1</div><div class="t" style="left:411.5px;width:98px;text-align:center;top:746px;font-size:15px;line-height:15px;color:#000;font-weight:normal;-webkit-text-stroke:0.2px #000">只</div><div class="t" style="left:469.5px;width:124px;text-align:center;top:747px;font-size:14px;line-height:14px;color:#000;font-weight:normal;-webkit-text-stroke:0.1px #000">30530</div><div class="t" style="left:553.5px;width:124px;text-align:center;top:747px;font-size:14px;line-height:14px;color:#000;font-weight:normal;-webkit-text-stroke:0.1px #000">31530</div><div class="t" style="left:637.5px;width:112px;text-align:center;top:747px;font-size:14px;line-height:14px;color:#000;font-weight:normal;-webkit-text-stroke:0.1px #000">3</div><div class="t" style="left:709.5px;width:112px;text-align:center;top:747px;font-size:14px;line-height:14px;color:#000;font-weight:normal;-webkit-text-stroke:0.1px #000">0</div><div class="t" style="left:781.5px;width:112px;text-align:center;top:747px;font-size:14px;line-height:14px;color:#000;font-weight:normal;-webkit-text-stroke:0.1px #000">0</div><div class="t" style="left:853.5px;width:124px;text-align:center;top:747px;font-size:14px;line-height:14px;color:#000;font-weight:normal;-webkit-text-stroke:0.1px #000">1</div><div class="t" style="left:937.5px;width:112px;text-align:center;top:746px;font-size:15px;line-height:15px;color:#000;font-weight:normal;-webkit-text-stroke:0.2px #000">上仙</div><div class="t" style="left:1009.5px;width:112px;text-align:center;top:746px;font-size:15px;line-height:15px;color:#000;font-weight:normal;-webkit-text-stroke:0.2px #000">妖怪</div><div class="t" style="left:1081.5px;width:112px;text-align:center;top:746px;font-size:15px;line-height:15px;color:#000;font-weight:normal;-webkit-text-stroke:0.2px #000">本仙</div><div class="t" style="left:1153.5px;width:112px;text-align:center;top:746px;font-size:15px;line-height:15px;color:#000;font-weight:normal;-webkit-text-stroke:0.2px #000">老妖我</div><div class="t" style="left:1225.5px;width:124px;text-align:center;top:747px;font-size:14px;line-height:14px;color:#000;font-weight:normal;-webkit-text-stroke:0.1px #000">30530</div><div class="t" style="left:1309.5px;width:112px;text-align:center;top:747px;font-size:14px;line-height:14px;color:#000;font-weight:normal;-webkit-text-stroke:0.1px #000">1</div><div class="t" style="left:1381.5px;width:112px;text-align:center;top:747px;font-size:14px;line-height:14px;color:#000;font-weight:normal;-webkit-text-stroke:0.1px #000">7373</div><div class="t" style="left:1453.5px;width:112px;text-align:center;top:747px;font-size:14px;line-height:14px;color:#000;font-weight:normal;-webkit-text-stroke:0.1px #000">5056</div><div class="t" style="left:1525.5px;width:112px;text-align:center;top:747px;font-size:14px;line-height:14px;color:#000;font-weight:normal;-webkit-text-stroke:0.1px #000">1322</div><div class="t" style="left:1597.5px;width:112px;text-align:center;top:747px;font-size:14px;line-height:14px;color:#000;font-weight:normal;-webkit-text-stroke:0.1px #000">581</div><div class="t" style="left:1669.5px;width:112px;text-align:center;top:747px;font-size:14px;line-height:14px;color:#000;font-weight:normal;-webkit-text-stroke:0.1px #000">275</div><div class="t" style="left:1741.5px;width:112px;text-align:center;top:747px;font-size:14px;line-height:14px;color:#000;font-weight:normal;-webkit-text-stroke:0.1px #000">4</div><div class="t" style="left:1813.5px;width:112px;text-align:center;top:747px;font-size:14px;line-height:14px;color:#000;font-weight:normal;-webkit-text-stroke:0.1px #000">25375</div><div class="t" style="left:4.5px;width:149px;text-align:center;top:775px;font-size:15px;line-height:15px;color:#000;font-weight:normal;-webkit-text-stroke:0.2px #000">盘古猿</div><div class="t" style="left:113.5px;width:182px;text-align:center;top:776px;font-size:14px;line-height:14px;color:#000;font-weight:normal;-webkit-text-stroke:0.1px #000">panguyuan</div><div class="t" style="left:255.5px;width:141px;text-align:center;top:775px;font-size:15px;line-height:15px;color:#000;font-weight:normal;-webkit-text-stroke:0.2px #000">盘古猿</div><div class="t" style="left:356.5px;width:95px;text-align:center;top:776px;font-size:14px;line-height:14px;color:#000;font-weight:normal;-webkit-text-stroke:0.1px #000">1</div><div class="t" style="left:411.5px;width:98px;text-align:center;top:775px;font-size:15px;line-height:15px;color:#000;font-weight:normal;-webkit-text-stroke:0.2px #000">只</div><div class="t" style="left:469.5px;width:124px;text-align:center;top:776px;font-size:14px;line-height:14px;color:#000;font-weight:normal;-webkit-text-stroke:0.1px #000">30528</div><div class="t" style="left:553.5px;width:124px;text-align:center;top:776px;font-size:14px;line-height:14px;color:#000;font-weight:normal;-webkit-text-stroke:0.1px #000">31528</div><div class="t" style="left:637.5px;width:112px;text-align:center;top:776px;font-size:14px;line-height:14px;color:#000;font-weight:normal;-webkit-text-stroke:0.1px #000">3</div><div class="t" style="left:709.5px;width:112px;text-align:center;top:776px;font-size:14px;line-height:14px;color:#000;font-weight:normal;-webkit-text-stroke:0.1px #000">0</div><div class="t" style="left:781.5px;width:112px;text-align:center;top:776px;font-size:14px;line-height:14px;color:#000;font-weight:normal;-webkit-text-stroke:0.1px #000">0</div><div class="t" style="left:853.5px;width:124px;text-align:center;top:776px;font-size:14px;line-height:14px;color:#000;font-weight:normal;-webkit-text-stroke:0.1px #000">1</div><div class="t" style="left:937.5px;width:112px;text-align:center;top:775px;font-size:15px;line-height:15px;color:#000;font-weight:normal;-webkit-text-stroke:0.2px #000">上仙</div><div class="t" style="left:1009.5px;width:112px;text-align:center;top:775px;font-size:15px;line-height:15px;color:#000;font-weight:normal;-webkit-text-stroke:0.2px #000">妖怪</div><div class="t" style="left:1081.5px;width:112px;text-align:center;top:775px;font-size:15px;line-height:15px;color:#000;font-weight:normal;-webkit-text-stroke:0.2px #000">本仙</div><div class="t" style="left:1153.5px;width:112px;text-align:center;top:775px;font-size:15px;line-height:15px;color:#000;font-weight:normal;-webkit-text-stroke:0.2px #000">老妖我</div><div class="t" style="left:1225.5px;width:124px;text-align:center;top:776px;font-size:14px;line-height:14px;color:#000;font-weight:normal;-webkit-text-stroke:0.1px #000">30528</div><div class="t" style="left:1309.5px;width:112px;text-align:center;top:776px;font-size:14px;line-height:14px;color:#000;font-weight:normal;-webkit-text-stroke:0.1px #000">1</div><div class="t" style="left:1381.5px;width:112px;text-align:center;top:776px;font-size:14px;line-height:14px;color:#000;font-weight:normal;-webkit-text-stroke:0.1px #000">7373</div><div class="t" style="left:1453.5px;width:112px;text-align:center;top:776px;font-size:14px;line-height:14px;color:#000;font-weight:normal;-webkit-text-stroke:0.1px #000">5056</div><div class="t" style="left:1525.5px;width:112px;text-align:center;top:776px;font-size:14px;line-height:14px;color:#000;font-weight:normal;-webkit-text-stroke:0.1px #000">1322</div><div class="t" style="left:1597.5px;width:112px;text-align:center;top:776px;font-size:14px;line-height:14px;color:#000;font-weight:normal;-webkit-text-stroke:0.1px #000">581</div><div class="t" style="left:1669.5px;width:112px;text-align:center;top:776px;font-size:14px;line-height:14px;color:#000;font-weight:normal;-webkit-text-stroke:0.1px #000">275</div><div class="t" style="left:1741.5px;width:112px;text-align:center;top:776px;font-size:14px;line-height:14px;color:#000;font-weight:normal;-webkit-text-stroke:0.1px #000">1</div><div class="t" style="left:1813.5px;width:112px;text-align:center;top:776px;font-size:14px;line-height:14px;color:#000;font-weight:normal;-webkit-text-stroke:0.1px #000">25375</div><div class="t" style="left:4.5px;width:149px;text-align:center;top:804px;font-size:15px;line-height:15px;color:#000;font-weight:normal;-webkit-text-stroke:0.2px #000">至尊太极熊</div><div class="t" style="left:113.5px;width:182px;text-align:center;top:805px;font-size:14px;line-height:14px;color:#000;font-weight:normal;-webkit-text-stroke:0.1px #000">zhizun-taijixiong</div><div class="t" style="left:255.5px;width:141px;text-align:center;top:804px;font-size:15px;line-height:15px;color:#000;font-weight:normal;-webkit-text-stroke:0.2px #000">至尊太极熊</div><div class="t" style="left:356.5px;width:95px;text-align:center;top:805px;font-size:14px;line-height:14px;color:#000;font-weight:normal;-webkit-text-stroke:0.1px #000">1</div><div class="t" style="left:411.5px;width:98px;text-align:center;top:804px;font-size:15px;line-height:15px;color:#000;font-weight:normal;-webkit-text-stroke:0.2px #000">只</div><div class="t" style="left:469.5px;width:124px;text-align:center;top:805px;font-size:14px;line-height:14px;color:#000;font-weight:normal;-webkit-text-stroke:0.1px #000">30538</div><div class="t" style="left:553.5px;width:124px;text-align:center;top:805px;font-size:14px;line-height:14px;color:#000;font-weight:normal;-webkit-text-stroke:0.1px #000">31538</div><div class="t" style="left:637.5px;width:112px;text-align:center;top:805px;font-size:14px;line-height:14px;color:#000;font-weight:normal;-webkit-text-stroke:0.1px #000">3</div><div class="t" style="left:709.5px;width:112px;text-align:center;top:805px;font-size:14px;line-height:14px;color:#000;font-weight:normal;-webkit-text-stroke:0.1px #000">0</div><div class="t" style="left:781.5px;width:112px;text-align:center;top:805px;font-size:14px;line-height:14px;color:#000;font-weight:normal;-webkit-text-stroke:0.1px #000">0</div><div class="t" style="left:853.5px;width:124px;text-align:center;top:805px;font-size:14px;line-height:14px;color:#000;font-weight:normal;-webkit-text-stroke:0.1px #000">1</div><div class="t" style="left:937.5px;width:112px;text-align:center;top:804px;font-size:15px;line-height:15px;color:#000;font-weight:normal;-webkit-text-stroke:0.2px #000">上仙</div><div class="t" style="left:1009.5px;width:112px;text-align:center;top:804px;font-size:15px;line-height:15px;color:#000;font-weight:normal;-webkit-text-stroke:0.2px #000">妖怪</div><div class="t" style="left:1081.5px;width:112px;text-align:center;top:804px;font-size:15px;line-height:15px;color:#000;font-weight:normal;-webkit-text-stroke:0.2px #000">本仙</div><div class="t" style="left:1153.5px;width:112px;text-align:center;top:804px;font-size:15px;line-height:15px;color:#000;font-weight:normal;-webkit-text-stroke:0.2px #000">老妖我</div><div class="t" style="left:1225.5px;width:124px;text-align:center;top:805px;font-size:14px;line-height:14px;color:#000;font-weight:normal;-webkit-text-stroke:0.1px #000">30538</div><div class="t" style="left:1309.5px;width:112px;text-align:center;top:805px;font-size:14px;line-height:14px;color:#000;font-weight:normal;-webkit-text-stroke:0.1px #000">1</div><div class="t" style="left:1381.5px;width:112px;text-align:center;top:805px;font-size:14px;line-height:14px;color:#000;font-weight:normal;-webkit-text-stroke:0.1px #000">7373</div><div class="t" style="left:1453.5px;width:112px;text-align:center;top:805px;font-size:14px;line-height:14px;color:#000;font-weight:normal;-webkit-text-stroke:0.1px #000">5056</div><div class="t" style="left:1525.5px;width:112px;text-align:center;top:805px;font-size:14px;line-height:14px;color:#000;font-weight:normal;-webkit-text-stroke:0.1px #000">1322</div><div class="t" style="left:1597.5px;width:112px;text-align:center;top:805px;font-size:14px;line-height:14px;color:#000;font-weight:normal;-webkit-text-stroke:0.1px #000">581</div><div class="t" style="left:1669.5px;width:112px;text-align:center;top:805px;font-size:14px;line-height:14px;color:#000;font-weight:normal;-webkit-text-stroke:0.1px #000">275</div><div class="t" style="left:1741.5px;width:112px;text-align:center;top:805px;font-size:14px;line-height:14px;color:#000;font-weight:normal;-webkit-text-stroke:0.1px #000">5</div><div class="t" style="left:1813.5px;width:112px;text-align:center;top:805px;font-size:14px;line-height:14px;color:#000;font-weight:normal;-webkit-text-stroke:0.1px #000">25375</div><div class="t" style="left:4.5px;width:149px;text-align:center;top:833px;font-size:15px;line-height:15px;color:#000;font-weight:normal;-webkit-text-stroke:0.2px #000">至尊玉蝶鱼</div><div class="t" style="left:113.5px;width:182px;text-align:center;top:834px;font-size:14px;line-height:14px;color:#000;font-weight:normal;-webkit-text-stroke:0.1px #000">zhizun-yudieyu</div><div class="t" style="left:255.5px;width:141px;text-align:center;top:833px;font-size:15px;line-height:15px;color:#000;font-weight:normal;-webkit-text-stroke:0.2px #000">至尊玉蝶鱼</div><div class="t" style="left:356.5px;width:95px;text-align:center;top:834px;font-size:14px;line-height:14px;color:#000;font-weight:normal;-webkit-text-stroke:0.1px #000">1</div><div class="t" style="left:411.5px;width:98px;text-align:center;top:833px;font-size:15px;line-height:15px;color:#000;font-weight:normal;-webkit-text-stroke:0.2px #000">条</div><div class="t" style="left:469.5px;width:124px;text-align:center;top:834px;font-size:14px;line-height:14px;color:#000;font-weight:normal;-webkit-text-stroke:0.1px #000">30539</div><div class="t" style="left:553.5px;width:124px;text-align:center;top:834px;font-size:14px;line-height:14px;color:#000;font-weight:normal;-webkit-text-stroke:0.1px #000">31539</div><div class="t" style="left:637.5px;width:112px;text-align:center;top:834px;font-size:14px;line-height:14px;color:#000;font-weight:normal;-webkit-text-stroke:0.1px #000">3</div><div class="t" style="left:709.5px;width:112px;text-align:center;top:834px;font-size:14px;line-height:14px;color:#000;font-weight:normal;-webkit-text-stroke:0.1px #000">0</div><div class="t" style="left:781.5px;width:112px;text-align:center;top:834px;font-size:14px;line-height:14px;color:#000;font-weight:normal;-webkit-text-stroke:0.1px #000">0</div><div class="t" style="left:853.5px;width:124px;text-align:center;top:834px;font-size:14px;line-height:14px;color:#000;font-weight:normal;-webkit-text-stroke:0.1px #000">1</div><div class="t" style="left:937.5px;width:112px;text-align:center;top:833px;font-size:15px;line-height:15px;color:#000;font-weight:normal;-webkit-text-stroke:0.2px #000">上仙</div><div class="t" style="left:1009.5px;width:112px;text-align:center;top:833px;font-size:15px;line-height:15px;color:#000;font-weight:normal;-webkit-text-stroke:0.2px #000">妖怪</div><div class="t" style="left:1081.5px;width:112px;text-align:center;top:833px;font-size:15px;line-height:15px;color:#000;font-weight:normal;-webkit-text-stroke:0.2px #000">本仙</div><div class="t" style="left:1153.5px;width:112px;text-align:center;top:833px;font-size:15px;line-height:15px;color:#000;font-weight:normal;-webkit-text-stroke:0.2px #000">老妖我</div><div class="t" style="left:1225.5px;width:124px;text-align:center;top:834px;font-size:14px;line-height:14px;color:#000;font-weight:normal;-webkit-text-stroke:0.1px #000">30539</div><div class="t" style="left:1309.5px;width:112px;text-align:center;top:834px;font-size:14px;line-height:14px;color:#000;font-weight:normal;-webkit-text-stroke:0.1px #000">1</div><div class="t" style="left:1381.5px;width:112px;text-align:center;top:834px;font-size:14px;line-height:14px;color:#000;font-weight:normal;-webkit-text-stroke:0.1px #000">7373</div><div class="t" style="left:1453.5px;width:112px;text-align:center;top:834px;font-size:14px;line-height:14px;color:#000;font-weight:normal;-webkit-text-stroke:0.1px #000">5056</div><div class="t" style="left:1525.5px;width:112px;text-align:center;top:834px;font-size:14px;line-height:14px;color:#000;font-weight:normal;-webkit-text-stroke:0.1px #000">1322</div><div class="t" style="left:1597.5px;width:112px;text-align:center;top:834px;font-size:14px;line-height:14px;color:#000;font-weight:normal;-webkit-text-stroke:0.1px #000">581</div><div class="t" style="left:1669.5px;width:112px;text-align:center;top:834px;font-size:14px;line-height:14px;color:#000;font-weight:normal;-webkit-text-stroke:0.1px #000">275</div><div class="t" style="left:1741.5px;width:112px;text-align:center;top:834px;font-size:14px;line-height:14px;color:#000;font-weight:normal;-webkit-text-stroke:0.1px #000">5</div><div class="t" style="left:1813.5px;width:112px;text-align:center;top:834px;font-size:14px;line-height:14px;color:#000;font-weight:normal;-webkit-text-stroke:0.1px #000">25375</div><div class="t" style="left:4.5px;width:149px;text-align:center;top:862px;font-size:15px;line-height:15px;color:#000;font-weight:normal;-webkit-text-stroke:0.2px #000">至尊盘古猿</div><div class="t" style="left:113.5px;width:182px;text-align:center;top:863px;font-size:14px;line-height:14px;color:#000;font-weight:normal;-webkit-text-stroke:0.1px #000">zhizun-panguyuan</div><div class="t" style="left:255.5px;width:141px;text-align:center;top:862px;font-size:15px;line-height:15px;color:#000;font-weight:normal;-webkit-text-stroke:0.2px #000">至尊盘古猿</div><div class="t" style="left:356.5px;width:95px;text-align:center;top:863px;font-size:14px;line-height:14px;color:#000;font-weight:normal;-webkit-text-stroke:0.1px #000">1</div><div class="t" style="left:411.5px;width:98px;text-align:center;top:862px;font-size:15px;line-height:15px;color:#000;font-weight:normal;-webkit-text-stroke:0.2px #000">只</div><div class="t" style="left:469.5px;width:124px;text-align:center;top:863px;font-size:14px;line-height:14px;color:#000;font-weight:normal;-webkit-text-stroke:0.1px #000">30540</div><div class="t" style="left:553.5px;width:124px;text-align:center;top:863px;font-size:14px;line-height:14px;color:#000;font-weight:normal;-webkit-text-stroke:0.1px #000">31540</div><div class="t" style="left:637.5px;width:112px;text-align:center;top:863px;font-size:14px;line-height:14px;color:#000;font-weight:normal;-webkit-text-stroke:0.1px #000">3</div><div class="t" style="left:709.5px;width:112px;text-align:center;top:863px;font-size:14px;line-height:14px;color:#000;font-weight:normal;-webkit-text-stroke:0.1px #000">0</div><div class="t" style="left:781.5px;width:112px;text-align:center;top:863px;font-size:14px;line-height:14px;color:#000;font-weight:normal;-webkit-text-stroke:0.1px #000">0</div><div class="t" style="left:853.5px;width:124px;text-align:center;top:863px;font-size:14px;line-height:14px;color:#000;font-weight:normal;-webkit-text-stroke:0.1px #000">1</div><div class="t" style="left:937.5px;width:112px;text-align:center;top:862px;font-size:15px;line-height:15px;color:#000;font-weight:normal;-webkit-text-stroke:0.2px #000">上仙</div><div class="t" style="left:1009.5px;width:112px;text-align:center;top:862px;font-size:15px;line-height:15px;color:#000;font-weight:normal;-webkit-text-stroke:0.2px #000">妖怪</div><div class="t" style="left:1081.5px;width:112px;text-align:center;top:862px;font-size:15px;line-height:15px;color:#000;font-weight:normal;-webkit-text-stroke:0.2px #000">本仙</div><div class="t" style="left:1153.5px;width:112px;text-align:center;top:862px;font-size:15px;line-height:15px;color:#000;font-weight:normal;-webkit-text-stroke:0.2px #000">老妖我</div><div class="t" style="left:1225.5px;width:124px;text-align:center;top:863px;font-size:14px;line-height:14px;color:#000;font-weight:normal;-webkit-text-stroke:0.1px #000">30540</div><div class="t" style="left:1309.5px;width:112px;text-align:center;top:863px;font-size:14px;line-height:14px;color:#000;font-weight:normal;-webkit-text-stroke:0.1px #000">1</div><div class="t" style="left:1381.5px;width:112px;text-align:center;top:863px;font-size:14px;line-height:14px;color:#000;font-weight:normal;-webkit-text-stroke:0.1px #000">7373</div><div class="t" style="left:1453.5px;width:112px;text-align:center;top:863px;font-size:14px;line-height:14px;color:#000;font-weight:normal;-webkit-text-stroke:0.1px #000">5056</div><div class="t" style="left:1525.5px;width:112px;text-align:center;top:863px;font-size:14px;line-height:14px;color:#000;font-weight:normal;-webkit-text-stroke:0.1px #000">1322</div><div class="t" style="left:1597.5px;width:112px;text-align:center;top:863px;font-size:14px;line-height:14px;color:#000;font-weight:normal;-webkit-text-stroke:0.1px #000">581</div><div class="t" style="left:1669.5px;width:112px;text-align:center;top:863px;font-size:14px;line-height:14px;color:#000;font-weight:normal;-webkit-text-stroke:0.1px #000">275</div><div class="t" style="left:1741.5px;width:112px;text-align:center;top:863px;font-size:14px;line-height:14px;color:#000;font-weight:normal;-webkit-text-stroke:0.1px #000">1</div><div class="t" style="left:1813.5px;width:112px;text-align:center;top:863px;font-size:14px;line-height:14px;color:#000;font-weight:normal;-webkit-text-stroke:0.1px #000">25375</div><div class="t" style="left:4.5px;width:149px;text-align:center;top:891px;font-size:15px;line-height:15px;color:#000;font-weight:normal;-webkit-text-stroke:0.2px #000">吉祥蛙</div><div class="t" style="left:113.5px;width:182px;text-align:center;top:892px;font-size:14px;line-height:14px;color:#000;font-weight:normal;-webkit-text-stroke:0.1px #000">jixiangwa</div><div class="t" style="left:255.5px;width:141px;text-align:center;top:891px;font-size:15px;line-height:15px;color:#000;font-weight:normal;-webkit-text-stroke:0.2px #000">吉祥蛙</div><div class="t" style="left:356.5px;width:95px;text-align:center;top:892px;font-size:14px;line-height:14px;color:#000;font-weight:normal;-webkit-text-stroke:0.1px #000">1</div><div class="t" style="left:411.5px;width:98px;text-align:center;top:891px;font-size:15px;line-height:15px;color:#000;font-weight:normal;-webkit-text-stroke:0.2px #000">只</div><div class="t" style="left:469.5px;width:124px;text-align:center;top:892px;font-size:14px;line-height:14px;color:#000;font-weight:normal;-webkit-text-stroke:0.1px #000">30541</div><div class="t" style="left:553.5px;width:124px;text-align:center;top:892px;font-size:14px;line-height:14px;color:#000;font-weight:normal;-webkit-text-stroke:0.1px #000">31541</div><div class="t" style="left:637.5px;width:112px;text-align:center;top:892px;font-size:14px;line-height:14px;color:#000;font-weight:normal;-webkit-text-stroke:0.1px #000">3</div><div class="t" style="left:709.5px;width:112px;text-align:center;top:892px;font-size:14px;line-height:14px;color:#000;font-weight:normal;-webkit-text-stroke:0.1px #000">0</div><div class="t" style="left:781.5px;width:112px;text-align:center;top:892px;font-size:14px;line-height:14px;color:#000;font-weight:normal;-webkit-text-stroke:0.1px #000">0</div><div class="t" style="left:853.5px;width:124px;text-align:center;top:892px;font-size:14px;line-height:14px;color:#000;font-weight:normal;-webkit-text-stroke:0.1px #000">1</div><div class="t" style="left:937.5px;width:112px;text-align:center;top:891px;font-size:15px;line-height:15px;color:#000;font-weight:normal;-webkit-text-stroke:0.2px #000">上仙</div><div class="t" style="left:1009.5px;width:112px;text-align:center;top:891px;font-size:15px;line-height:15px;color:#000;font-weight:normal;-webkit-text-stroke:0.2px #000">妖怪</div><div class="t" style="left:1081.5px;width:112px;text-align:center;top:891px;font-size:15px;line-height:15px;color:#000;font-weight:normal;-webkit-text-stroke:0.2px #000">本仙</div><div class="t" style="left:1153.5px;width:112px;text-align:center;top:891px;font-size:15px;line-height:15px;color:#000;font-weight:normal;-webkit-text-stroke:0.2px #000">老妖我</div><div class="t" style="left:1225.5px;width:124px;text-align:center;top:892px;font-size:14px;line-height:14px;color:#000;font-weight:normal;-webkit-text-stroke:0.1px #000">30541</div><div class="t" style="left:1309.5px;width:112px;text-align:center;top:892px;font-size:14px;line-height:14px;color:#000;font-weight:normal;-webkit-text-stroke:0.1px #000">1</div><div class="t" style="left:1381.5px;width:112px;text-align:center;top:892px;font-size:14px;line-height:14px;color:#000;font-weight:normal;-webkit-text-stroke:0.1px #000">7373</div><div class="t" style="left:1453.5px;width:112px;text-align:center;top:892px;font-size:14px;line-height:14px;color:#000;font-weight:normal;-webkit-text-stroke:0.1px #000">5056</div><div class="t" style="left:1525.5px;width:112px;text-align:center;top:892px;font-size:14px;line-height:14px;color:#000;font-weight:normal;-webkit-text-stroke:0.1px #000">1322</div><div class="t" style="left:1597.5px;width:112px;text-align:center;top:892px;font-size:14px;line-height:14px;color:#000;font-weight:normal;-webkit-text-stroke:0.1px #000">581</div><div class="t" style="left:1669.5px;width:112px;text-align:center;top:892px;font-size:14px;line-height:14px;color:#000;font-weight:normal;-webkit-text-stroke:0.1px #000">275</div><div class="t" style="left:1741.5px;width:112px;text-align:center;top:892px;font-size:14px;line-height:14px;color:#000;font-weight:normal;-webkit-text-stroke:0.1px #000">3</div><div class="t" style="left:1813.5px;width:112px;text-align:center;top:892px;font-size:14px;line-height:14px;color:#000;font-weight:normal;-webkit-text-stroke:0.1px #000">25375</div><div class="t" style="left:4.5px;width:149px;text-align:center;top:920px;font-size:15px;line-height:15px;color:#000;font-weight:normal;-webkit-text-stroke:0.2px #000">巨骨刺</div><div class="t" style="left:113.5px;width:182px;text-align:center;top:921px;font-size:14px;line-height:14px;color:#000;font-weight:normal;-webkit-text-stroke:0.1px #000">juguci</div><div class="t" style="left:255.5px;width:141px;text-align:center;top:920px;font-size:15px;line-height:15px;color:#000;font-weight:normal;-webkit-text-stroke:0.2px #000">巨骨刺</div><div class="t" style="left:356.5px;width:95px;text-align:center;top:921px;font-size:14px;line-height:14px;color:#000;font-weight:normal;-webkit-text-stroke:0.1px #000">1</div><div class="t" style="left:411.5px;width:98px;text-align:center;top:920px;font-size:15px;line-height:15px;color:#000;font-weight:normal;-webkit-text-stroke:0.2px #000">只</div><div class="t" style="left:469.5px;width:124px;text-align:center;top:921px;font-size:14px;line-height:14px;color:#000;font-weight:normal;-webkit-text-stroke:0.1px #000">30542</div><div class="t" style="left:553.5px;width:124px;text-align:center;top:921px;font-size:14px;line-height:14px;color:#000;font-weight:normal;-webkit-text-stroke:0.1px #000">31542</div><div class="t" style="left:637.5px;width:112px;text-align:center;top:921px;font-size:14px;line-height:14px;color:#000;font-weight:normal;-webkit-text-stroke:0.1px #000">3</div><div class="t" style="left:709.5px;width:112px;text-align:center;top:921px;font-size:14px;line-height:14px;color:#000;font-weight:normal;-webkit-text-stroke:0.1px #000">0</div><div class="t" style="left:781.5px;width:112px;text-align:center;top:921px;font-size:14px;line-height:14px;color:#000;font-weight:normal;-webkit-text-stroke:0.1px #000">0</div><div class="t" style="left:853.5px;width:124px;text-align:center;top:921px;font-size:14px;line-height:14px;color:#000;font-weight:normal;-webkit-text-stroke:0.1px #000">1</div><div class="t" style="left:937.5px;width:112px;text-align:center;top:920px;font-size:15px;line-height:15px;color:#000;font-weight:normal;-webkit-text-stroke:0.2px #000">上仙</div><div class="t" style="left:1009.5px;width:112px;text-align:center;top:920px;font-size:15px;line-height:15px;color:#000;font-weight:normal;-webkit-text-stroke:0.2px #000">妖怪</div><div class="t" style="left:1081.5px;width:112px;text-align:center;top:920px;font-size:15px;line-height:15px;color:#000;font-weight:normal;-webkit-text-stroke:0.2px #000">本仙</div><div class="t" style="left:1153.5px;width:112px;text-align:center;top:920px;font-size:15px;line-height:15px;color:#000;font-weight:normal;-webkit-text-stroke:0.2px #000">老妖我</div><div class="t" style="left:1225.5px;width:124px;text-align:center;top:921px;font-size:14px;line-height:14px;color:#000;font-weight:normal;-webkit-text-stroke:0.1px #000">30542</div><div class="t" style="left:1309.5px;width:112px;text-align:center;top:921px;font-size:14px;line-height:14px;color:#000;font-weight:normal;-webkit-text-stroke:0.1px #000">1</div><div class="t" style="left:1381.5px;width:112px;text-align:center;top:921px;font-size:14px;line-height:14px;color:#000;font-weight:normal;-webkit-text-stroke:0.1px #000">7373</div><div class="t" style="left:1453.5px;width:112px;text-align:center;top:921px;font-size:14px;line-height:14px;color:#000;font-weight:normal;-webkit-text-stroke:0.1px #000">5056</div><div class="t" style="left:1525.5px;width:112px;text-align:center;top:921px;font-size:14px;line-height:14px;color:#000;font-weight:normal;-webkit-text-stroke:0.1px #000">1322</div><div class="t" style="left:1597.5px;width:112px;text-align:center;top:921px;font-size:14px;line-height:14px;color:#000;font-weight:normal;-webkit-text-stroke:0.1px #000">581</div><div class="t" style="left:1669.5px;width:112px;text-align:center;top:921px;font-size:14px;line-height:14px;color:#000;font-weight:normal;-webkit-text-stroke:0.1px #000">275</div><div class="t" style="left:1741.5px;width:112px;text-align:center;top:921px;font-size:14px;line-height:14px;color:#000;font-weight:normal;-webkit-text-stroke:0.1px #000">1</div><div class="t" style="left:1813.5px;width:112px;text-align:center;top:921px;font-size:14px;line-height:14px;color:#000;font-weight:normal;-webkit-text-stroke:0.1px #000">25375</div><div class="t" style="left:4.5px;width:149px;text-align:center;top:949px;font-size:15px;line-height:15px;color:#000;font-weight:normal;-webkit-text-stroke:0.2px #000">至尊吉祥蛙</div><div class="t" style="left:113.5px;width:182px;text-align:center;top:950px;font-size:14px;line-height:14px;color:#000;font-weight:normal;-webkit-text-stroke:0.1px #000">zhizun-jixiangwa</div><div class="t" style="left:255.5px;width:141px;text-align:center;top:949px;font-size:15px;line-height:15px;color:#000;font-weight:normal;-webkit-text-stroke:0.2px #000">至尊吉祥蛙</div><div class="t" style="left:356.5px;width:95px;text-align:center;top:950px;font-size:14px;line-height:14px;color:#000;font-weight:normal;-webkit-text-stroke:0.1px #000">1</div><div class="t" style="left:411.5px;width:98px;text-align:center;top:949px;font-size:15px;line-height:15px;color:#000;font-weight:normal;-webkit-text-stroke:0.2px #000">只</div><div class="t" style="left:469.5px;width:124px;text-align:center;top:950px;font-size:14px;line-height:14px;color:#000;font-weight:normal;-webkit-text-stroke:0.1px #000">30546</div><div class="t" style="left:553.5px;width:124px;text-align:center;top:950px;font-size:14px;line-height:14px;color:#000;font-weight:normal;-webkit-text-stroke:0.1px #000">31546</div><div class="t" style="left:637.5px;width:112px;text-align:center;top:950px;font-size:14px;line-height:14px;color:#000;font-weight:normal;-webkit-text-stroke:0.1px #000">3</div><div class="t" style="left:709.5px;width:112px;text-align:center;top:950px;font-size:14px;line-height:14px;color:#000;font-weight:normal;-webkit-text-stroke:0.1px #000">0</div><div class="t" style="left:781.5px;width:112px;text-align:center;top:950px;font-size:14px;line-height:14px;color:#000;font-weight:normal;-webkit-text-stroke:0.1px #000">0</div><div class="t" style="left:853.5px;width:124px;text-align:center;top:950px;font-size:14px;line-height:14px;color:#000;font-weight:normal;-webkit-text-stroke:0.1px #000">1</div><div class="t" style="left:937.5px;width:112px;text-align:center;top:949px;font-size:15px;line-height:15px;color:#000;font-weight:normal;-webkit-text-stroke:0.2px #000">上仙</div><div class="t" style="left:1009.5px;width:112px;text-align:center;top:949px;font-size:15px;line-height:15px;color:#000;font-weight:normal;-webkit-text-stroke:0.2px #000">妖怪</div><div class="t" style="left:1081.5px;width:112px;text-align:center;top:949px;font-size:15px;line-height:15px;color:#000;font-weight:normal;-webkit-text-stroke:0.2px #000">本仙</div><div class="t" style="left:1153.5px;width:112px;text-align:center;top:949px;font-size:15px;line-height:15px;color:#000;font-weight:normal;-webkit-text-stroke:0.2px #000">老妖我</div><div class="t" style="left:1225.5px;width:124px;text-align:center;top:950px;font-size:14px;line-height:14px;color:#000;font-weight:normal;-webkit-text-stroke:0.1px #000">30546</div><div class="t" style="left:1309.5px;width:112px;text-align:center;top:950px;font-size:14px;line-height:14px;color:#000;font-weight:normal;-webkit-text-stroke:0.1px #000">1</div><div class="t" style="left:1381.5px;width:112px;text-align:center;top:950px;font-size:14px;line-height:14px;color:#000;font-weight:normal;-webkit-text-stroke:0.1px #000">7373</div><div class="t" style="left:1453.5px;width:112px;text-align:center;top:950px;font-size:14px;line-height:14px;color:#000;font-weight:normal;-webkit-text-stroke:0.1px #000">5056</div><div class="t" style="left:1525.5px;width:112px;text-align:center;top:950px;font-size:14px;line-height:14px;color:#000;font-weight:normal;-webkit-text-stroke:0.1px #000">1322</div><div class="t" style="left:1597.5px;width:112px;text-align:center;top:950px;font-size:14px;line-height:14px;color:#000;font-weight:normal;-webkit-text-stroke:0.1px #000">581</div><div class="t" style="left:1669.5px;width:112px;text-align:center;top:950px;font-size:14px;line-height:14px;color:#000;font-weight:normal;-webkit-text-stroke:0.1px #000">275</div><div class="t" style="left:1741.5px;width:112px;text-align:center;top:950px;font-size:14px;line-height:14px;color:#000;font-weight:normal;-webkit-text-stroke:0.1px #000">3</div><div class="t" style="left:1813.5px;width:112px;text-align:center;top:950px;font-size:14px;line-height:14px;color:#000;font-weight:normal;-webkit-text-stroke:0.1px #000">25375</div><div class="t" style="left:4.5px;width:149px;text-align:center;top:275px;font-size:15px;line-height:15px;color:#000;font-weight:bold;">名称</div><div class="t" style="left:113.5px;width:182px;text-align:center;top:275px;font-size:15px;line-height:15px;color:#000;font-weight:bold;">file_id</div><div class="t" style="left:255.5px;width:141px;text-align:center;top:275px;font-size:15px;line-height:15px;color:#000;font-weight:bold;">name</div><div class="t" style="left:356.5px;width:95px;text-align:center;top:264px;font-size:15px;line-height:15px;color:#000;font-weight:bold;">religio</div><div class="t" style="left:356.5px;width:95px;text-align:center;top:286px;font-size:15px;line-height:15px;color:#000;font-weight:bold;">n</div><div class="t" style="left:411.5px;width:98px;text-align:center;top:275px;font-size:15px;line-height:15px;color:#000;font-weight:bold;">unit</div><div class="t" style="left:469.5px;width:124px;text-align:center;top:275px;font-size:15px;line-height:15px;color:#000;font-weight:bold;">icon</div><div class="t" style="left:553.5px;width:124px;text-align:center;top:275px;font-size:15px;line-height:15px;color:#000;font-weight:bold;">骑宠</div><div class="t" style="left:637.5px;width:112px;text-align:center;top:264px;font-size:15px;line-height:15px;color:#000;font-weight:bold;">骑宠动作</div><div class="t" style="left:637.5px;width:112px;text-align:center;top:286px;font-size:15px;line-height:15px;color:#000;font-weight:bold;">_male</div><div class="t" style="left:709.5px;width:112px;text-align:center;top:264px;font-size:15px;line-height:15px;color:#000;font-weight:bold;">骑宠动作</div><div class="t" style="left:709.5px;width:112px;text-align:center;top:286px;font-size:15px;line-height:15px;color:#000;font-weight:bold;">_female</div><div class="t" style="left:781.5px;width:112px;text-align:center;top:275px;font-size:15px;line-height:15px;color:#000;font-weight:bold;">骑宠影子</div><div class="t" style="left:853.5px;width:124px;text-align:center;top:264px;font-size:15px;line-height:15px;color:#000;font-weight:bold;">遮挡部分编</div><div class="t" style="left:853.5px;width:124px;text-align:center;top:286px;font-size:15px;line-height:15px;color:#000;font-weight:bold;">号</div><div class="t" style="left:937.5px;width:112px;text-align:center;top:275px;font-size:15px;line-height:15px;color:#000;font-weight:bold;">尊称</div><div class="t" style="left:1009.5px;width:112px;text-align:center;top:275px;font-size:15px;line-height:15px;color:#000;font-weight:bold;">蔑称</div><div class="t" style="left:1081.5px;width:112px;text-align:center;top:264px;font-size:15px;line-height:15px;color:#000;font-weight:bold;">对自己的</div><div class="t" style="left:1081.5px;width:112px;text-align:center;top:286px;font-size:15px;line-height:15px;color:#000;font-weight:bold;">尊称</div><div class="t" style="left:1153.5px;width:112px;text-align:center;top:264px;font-size:15px;line-height:15px;color:#000;font-weight:bold;">对自己的</div><div class="t" style="left:1153.5px;width:112px;text-align:center;top:286px;font-size:15px;line-height:15px;color:#000;font-weight:bold;">谦称</div><div class="t" style="left:1225.5px;width:124px;text-align:center;top:275px;font-size:15px;line-height:15px;color:#000;font-weight:bold;">肖像</div><div class="t" style="left:1309.5px;width:112px;text-align:center;top:275px;font-size:15px;line-height:15px;color:#000;font-weight:bold;">等级</div><div class="t" style="left:1381.5px;width:112px;text-align:center;top:275px;font-size:15px;line-height:15px;color:#000;font-weight:bold;">血量</div><div class="t" style="left:1453.5px;width:112px;text-align:center;top:275px;font-size:15px;line-height:15px;color:#000;font-weight:bold;">法力值</div><div class="t" style="left:1525.5px;width:112px;text-align:center;top:275px;font-size:15px;line-height:15px;color:#000;font-weight:bold;">攻击</div><div class="t" style="left:1597.5px;width:112px;text-align:center;top:275px;font-size:15px;line-height:15px;color:#000;font-weight:bold;">防御</div><div class="t" style="left:1669.5px;width:112px;text-align:center;top:275px;font-size:15px;line-height:15px;color:#000;font-weight:bold;">速度</div><div class="t" style="left:1741.5px;width:112px;text-align:center;top:275px;font-size:15px;line-height:15px;color:#000;font-weight:bold;">主相性</div><div class="t" style="left:1813.5px;width:112px;text-align:center;top:275px;font-size:15px;line-height:15px;color:#000;font-weight:bold;">道行</div><div class="t" style="left:1206px;top:231px;font-size:21px;line-height:21px;color:#000;-webkit-text-stroke:0.25px #000;font-family:'Liberation Serif',serif;white-space:nowrap">坐骑完整数据表（所有字段）<span style="font-family:'Liberation Mono',monospace;font-size:18.2px;-webkit-text-stroke:0.35px #000">mount.list</span></div><div class="r" style="left:572px;top:564px;width:87px;height:32px;box-sizing:border-box;border:2px solid #217346"></div><div class="r" style="left:654px;top:590px;width:6px;height:7px;background:#fff"></div><div class="r" style="left:655px;top:592px;width:5px;height:5px;background:#217346"></div><div class="r" style="left:0px;top:153px;width:1897px;height:48px;background:#e6e6e6"></div><div class="r" style="left:0px;top:153px;width:1897px;height:1px;background:#d4d4d4"></div><div class="r" style="left:2px;top:164px;width:101px;height:28px;box-sizing:border-box;background:#fff;border:1px solid #c6c6c6"></div><div class="t" style="left:8px;top:171px;font-size:13px;line-height:13px;color:#444;font-weight:normal;-webkit-text-stroke:0">G54</div><svg class="s" style="left:89px;top:175px;" width="8" height="5" viewBox="0 0 8 5"><polygon points="0,0 7,0 3.5,3.5" fill="#666"/></svg><div class="r" style="left:117px;top:173px;width:2px;height:2px;background:#999"></div><div class="r" style="left:117px;top:177px;width:2px;height:2px;background:#999"></div><div class="r" style="left:117px;top:181px;width:2px;height:2px;background:#999"></div><div class="r" style="left:133px;top:164px;width:110px;height:28px;box-sizing:border-box;background:#fff;border:1px solid #c6c6c6"></div><svg class="s" style="left:145px;top:170px;" width="16" height="16" viewBox="0 0 16 16"><path d="M3,3 L13,13 M13,3 L3,13" stroke="#b0b0b0" stroke-width="1.6"/></svg><svg class="s" style="left:179px;top:170px;" width="18" height="16" viewBox="0 0 18 16"><path d="M3,9 L7,13 L15,3" stroke="#b8b8b8" stroke-width="2" fill="none"/></svg><div class="t" style="left:218px;top:170px;font-size:15px;line-height:15px;color:#555;font-family:'Liberation Serif',serif;font-style:italic;-webkit-text-stroke:0.2px #555">f<span style="font-size:10px">x</span></div><div class="r" style="left:246px;top:164px;width:1651px;height:28px;box-sizing:border-box;background:#fff;border:1px solid #c6c6c6;border-right:none"></div><div class="t" style="left:258px;top:171px;font-size:13px;line-height:13px;color:#333;font-weight:normal;-webkit-text-stroke:0.1px #333">31522</div><div class="r" style="left:0px;top:0px;width:1897px;height:59px;background:#217346"></div><svg class="s" style="left:1380px;top:0px" width="517" height="59" viewBox="1380 0 517 59">
<g stroke="#1c6239" stroke-width="2.9" fill="none" opacity="0.9">
<circle cx="1425" cy="8.8" r="3.6"/><path d="M1428.6,8.8 L1600,8.8"/>
<circle cx="1444.6" cy="35.1" r="17.3" stroke-width="3.6"/>
<path d="M1450.5,27.8 H1437.8 V41" stroke-width="3"/><path d="M1438.5,28.5 L1451.5,41.5" stroke-width="3.2"/>
<circle cx="1490.4" cy="28.3" r="3.6"/><path d="M1494,28.3 L1590,28.3 L1640,59"/>
<circle cx="1630.9" cy="39" r="3.6"/><path d="M1627.3,39 L1542,39 L1514,59"/>
<path d="M1634.5,39 L1643,39 L1667,56 L1900,56"/>
<circle cx="1415.4" cy="57" r="3.6"/><path d="M1419,57 L1515,57"/>
<circle cx="1698.4" cy="12.5" r="28" stroke-width="4.6"/><path d="M1686.5,25 L1696,15.5" stroke-width="3.4"/>
<path d="M1633.8,13.7 L1680.6,46.8 L1788,46.8 L1812,19.6 L1897,19.6"/>
<path d="M1895,0 L1862,32 M1900,16 L1882,31"/>
</g>

</svg><svg class="s" style="left:17px;top:4px;" width="16" height="16" viewBox="0 0 16 16"><rect x="1" y="1" width="14" height="14" rx="0.8" fill="#fff"/><rect x="3.2" y="2.2" width="9.4" height="4.5" fill="#217346"/><rect x="4" y="10.2" width="8.4" height="3.8" fill="#217346"/><rect x="6" y="12" width="2" height="2" fill="#fff"/></svg><svg class="s" style="left:44px;top:2px" width="36" height="20" viewBox="44 2 36 20"><path d="M48.5,9.1 H56.3 A4.3,4.3 0 0 1 56.3,17.7 H55.5" fill="none" stroke="#62a47e" stroke-width="2.2"/><path d="M52,5.3 L48.2,9.1 L52,12.9" fill="none" stroke="#62a47e" stroke-width="2.2"/><path d="M67.6,10.2 L70.5,12.8 L73.4,10.2" stroke="#62a47e" stroke-width="1.3" fill="none"/></svg><svg class="s" style="left:83px;top:2px" width="36" height="20" viewBox="83 2 36 20"><path d="M98.6,9.1 H90.8 A4.3,4.3 0 0 0 90.8,17.7 H91.6" fill="none" stroke="#62a47e" stroke-width="2.2"/><path d="M95.1,5.3 L98.9,9.1 L95.1,12.9" fill="none" stroke="#62a47e" stroke-width="2.2"/><path d="M106.6,10.2 L109.5,12.8 L112.4,10.2" stroke="#62a47e" stroke-width="1.3" fill="none"/></svg><svg class="s" style="left:126px;top:5px" width="12" height="14" viewBox="126 5 12 14"><rect x="129" y="8.9" width="5.2" height="1.1" fill="#fff"/><polygon points="128.8,12 134.4,12 131.6,15.2" fill="#fff"/></svg><div class="t" style="left:877px;top:5px;font-size:12px;line-height:12px;color:#fff;font-weight:normal;">坐骑完整数据表.xlsx</div><div class="t" style="left:994px;top:5px;font-size:12px;line-height:12px;color:#fff;font-weight:normal;">-</div><div class="t" style="left:1006px;top:6px;font-size:12.5px;line-height:12.5px;color:#fff;font-weight:normal;">Excel</div><div class="t" style="left:1587px;top:4px;font-size:12px;line-height:12px;color:#fff;font-weight:normal;">有梦想的咸鱼 一条</div><div class="r" style="left:1696px;top:0px;width:24px;height:24px;background:#b4b4b4"></div><svg class="s" style="left:1696px;top:0px;" width="24" height="24" viewBox="0 0 24 24"><circle cx="12" cy="8.5" r="4.8" fill="#fff"/><path d="M4,24 Q4,15 12,15 Q20,15 20,24 Z" fill="#fff"/></svg><svg class="s" style="left:1745px;top:2px" width="20" height="16" viewBox="1745 2 20 16"><rect x="1748.5" y="5.5" width="12" height="9" fill="none" stroke="#fff"/><path d="M1748.5,7.5 H1760.5" stroke="#fff"/><path d="M1754.5,14 V9.5 M1752.5,11.5 L1754.5,9.5 L1756.5,11.5" stroke="#fff" fill="none"/></svg><div class="r" style="left:1796px;top:9px;width:10px;height:1px;background:#fff"></div><svg class="s" style="left:1840px;top:3px" width="16" height="15" viewBox="1840 3 16 15"><rect x="1842.5" y="7.5" width="7" height="7" fill="none" stroke="#fff"/><path d="M1844.5,7.5 V5.5 H1850.5 Q1851.5,5.5 1851.5,6.5 V12.5 H1849.5" fill="none" stroke="#fff"/></svg><svg class="s" style="left:1885px;top:3px" width="12" height="14" viewBox="1885 3 12 14"><path d="M1888,5 L1898,15 M1898,5 L1888,15" stroke="#fff" stroke-width="1.1"/></svg><div class="r" style="left:57px;top:29px;width:49px;height:30px;background:#f3f3f3"></div><div class="t" style="left:13px;top:37px;font-size:12px;line-height:12px;color:#fff;font-weight:normal;">文件</div><div class="t" style="left:69px;top:37px;font-size:12px;line-height:12px;color:#1e6b3f;font-weight:normal;">开始</div><div class="t" style="left:120px;top:37px;font-size:12px;line-height:12px;color:#fff;font-weight:normal;">OfficePLUS</div><div class="t" style="left:210px;top:37px;font-size:12px;line-height:12px;color:#fff;font-weight:normal;">插入</div><div class="t" style="left:261px;top:37px;font-size:12px;line-height:12px;color:#fff;font-weight:normal;">页面布局</div><div class="t" style="left:336px;top:37px;font-size:12px;line-height:12px;color:#fff;font-weight:normal;">公式</div><div class="t" style="left:387px;top:37px;font-size:12px;line-height:12px;color:#fff;font-weight:normal;">数据</div><div class="t" style="left:438px;top:37px;font-size:12px;line-height:12px;color:#fff;font-weight:normal;">审阅</div><div class="t" style="left:488px;top:37px;font-size:12px;line-height:12px;color:#fff;font-weight:normal;">视图</div><div class="t" style="left:540px;top:37px;font-size:12px;line-height:12px;color:#fff;font-weight:normal;">PDF工具箱</div><div class="t" style="left:625px;top:37px;font-size:12px;line-height:12px;color:#fff;font-weight:normal;">帮助</div><div class="t" style="left:704px;top:37px;font-size:12px;line-height:12px;color:#fff;font-weight:normal;">操作说明搜索</div><svg class="s" style="left:678px;top:33px;" width="16" height="20" viewBox="0 0 16 20"><path d="M5,13 Q2,10 2,7 A6,6 0 0 1 14,7 Q14,10 11,13 L11,15 H5 Z" fill="none" stroke="#fff" stroke-width="1.2"/><path d="M6,17 H10" stroke="#fff" stroke-width="1.2"/></svg><div class="r" style="left:1840px;top:32px;width:60px;height:24px;box-sizing:border-box;border:1px solid #fff"></div><svg class="s" style="left:1843px;top:36px" width="16" height="16" viewBox="1843 36 16 16"><path d="M1845.5,43 V49.5 H1855.5 V46" fill="none" stroke="#fff" stroke-width="1"/><path d="M1848,46 Q1849,41 1854,41 M1852,38.5 L1855,41 L1852,43.5" fill="none" stroke="#fff" stroke-width="1.1"/></svg><div class="t" style="left:1861px;top:35px;font-size:14px;line-height:14px;color:#fff;font-weight:normal;-webkit-text-stroke:0.3px #fff">共享</div><svg class="s" style="left:1890px;top:40px" width="7" height="6" viewBox="1890 40 7 6"><path d="M1891.5,42 L1894.5,45 L1897.5,42" fill="none" stroke="#fff" stroke-width="1.1"/></svg><div class="r" style="left:0px;top:59px;width:1897px;height:94px;background:#f3f3f3"></div><div class="r" style="left:99px;top:63px;width:1px;height:86px;background:#9a9a9a"></div><div class="r" style="left:377px;top:63px;width:1px;height:86px;background:#9a9a9a"></div><div class="r" style="left:640px;top:63px;width:1px;height:86px;background:#9a9a9a"></div><div class="r" style="left:796px;top:63px;width:1px;height:86px;background:#9a9a9a"></div><div class="r" style="left:907px;top:63px;width:1px;height:86px;background:#9a9a9a"></div><div class="r" style="left:1106px;top:63px;width:1px;height:86px;background:#9a9a9a"></div><div class="r" style="left:1248px;top:63px;width:1px;height:86px;background:#9a9a9a"></div><div class="r" style="left:1495px;top:63px;width:1px;height:86px;background:#9a9a9a"></div><div class="r" style="left:1716px;top:63px;width:1px;height:86px;background:#9a9a9a"></div><div class="r" style="left:1774px;top:63px;width:1px;height:86px;background:#9a9a9a"></div><div class="r" style="left:1883px;top:63px;width:1px;height:86px;background:#9a9a9a"></div><svg class="s" style="left:8px;top:62px;" width="40" height="40" viewBox="0 0 40 40"><rect x="4.9" y="7.8" width="24.1" height="25.1" rx="1.5" fill="#ebc47c"/><rect x="9.3" y="7.5" width="15.4" height="5.3" fill="#f3f3f3"/><rect x="10.1" y="8.2" width="13.8" height="3.5" fill="#777"/><rect x="14.2" y="5.1" width="5.6" height="3.5" rx="1" fill="#777"/><rect x="16" y="7.2" width="2" height="1.6" fill="#fff"/><path d="M19.6,16.8 H27.5 L32.4,21.7 V34.3 H19.6 Z" fill="#f3f3f3" stroke="#f3f3f3" stroke-width="3"/><path d="M19.6,16.8 H27.5 L32.4,21.7 V34.3 H19.6 Z" fill="#fff" stroke="#777" stroke-width="1.2"/><path d="M27.5,16.8 V21.4 H32.4" fill="none" stroke="#777" stroke-width="1.2"/></svg><div class="t" style="left:12px;top:101px;font-size:12px;line-height:12px;color:#1f1f1f;font-weight:normal;">粘贴</div><svg class="s" style="left:22px;top:119px;" width="8" height="5" viewBox="0 0 8 5"><path d="M0.8,0.8 L3.8,3.8 L6.8,0.8" fill="none" stroke="#333" stroke-width="1.4"/></svg><svg class="s" style="left:48px;top:64px;" width="18" height="18" viewBox="0 0 18 18"><path d="M5,1.5 L10.5,10.5 M13,1.5 L7.5,10.5" stroke="#6e6e6e" stroke-width="1.9" stroke-linecap="round"/><circle cx="5" cy="13" r="2.6" fill="#f3f3f3" stroke="#4a86c8" stroke-width="1.3"/><circle cx="13" cy="13" r="2.6" fill="#f3f3f3" stroke="#4a86c8" stroke-width="1.3"/></svg><svg class="s" style="left:48px;top:88px;" width="18" height="17" viewBox="0 0 18 17"><path d="M1.5,1.5 H6.5 L8.5,3.5 V11.5 H1.5 Z" fill="#fff" stroke="#777" stroke-width="1.1"/><path d="M7.5,4.5 H13 L15.5,7 V14.5 H7.5 Z" fill="#fff" stroke="#777" stroke-width="1.1"/><path d="M3.4,4.5 H5.7 M3.4,6.5 H5.7 M3.4,8.5 H5.7 M9,7.4 H11.5 M9,9.5 H14 M9,11.5 H14" stroke="#3c78c0" stroke-width="1"/></svg><svg class="s" style="left:76px;top:94px;" width="8" height="5" viewBox="0 0 8 5"><path d="M0.8,0.8 L3.8,3.8 L6.8,0.8" fill="none" stroke="#222" stroke-width="1.4"/></svg><svg class="s" style="left:48px;top:110px;" width="18" height="17" viewBox="0 0 18 17"><path d="M12.5,4.2 L15,1.7 L17.3,4 L14.8,6.5 Z" fill="#6e6e6e"/><path d="M8,6 L12,3 L15.5,6.5 L12.5,10.5 Z" fill="#6e6e6e"/><path d="M1,8.5 L7.5,6.5 L12,11.5 L8,15.6 Z" fill="#ebc47c"/></svg><div class="t" style="left:22px;top:137px;font-size:12px;line-height:12px;color:#1f1f1f;font-weight:normal;">剪贴板</div><svg class="s" style="left:88px;top:141px;" width="9" height="9" viewBox="0 0 9 9"><path d="M0.5,7 V0.5 H7" fill="none" stroke="#1a1a1a" stroke-width="1"/><path d="M3,3 L7.5,7.5 M7.5,4 V7.5 H4" fill="none" stroke="#1a1a1a" stroke-width="1"/></svg><div class="r" style="left:108px;top:70px;width:172px;height:23px;box-sizing:border-box;background:#fff;border:1px solid #ababab"></div><div class="t" style="left:112px;top:75px;font-size:13px;line-height:13px;color:#1f1f1f;font-weight:normal;">Segoe UI</div><svg class="s" style="left:270px;top:80px;" width="7" height="5" viewBox="0 0 7 5"><polygon points="0,0.5 6,0.5 3,3.5" fill="#555"/></svg><div class="r" style="left:282px;top:70px;width:40px;height:23px;box-sizing:border-box;background:#fff;border:1px solid #ababab"></div><div class="t" style="left:285px;top:75px;font-size:13px;line-height:13px;color:#1f1f1f;font-weight:normal;">11</div><svg class="s" style="left:312px;top:80px;" width="7" height="5" viewBox="0 0 7 5"><polygon points="0,0.5 6,0.5 3,3.5" fill="#555"/></svg><div class="t" style="left:330px;top:74px;font-size:14px;line-height:14px;color:#444;font-weight:normal;">A</div><svg class="s" style="left:337px;top:72px" width="8" height="6" viewBox="337 72 8 6"><polygon points="338,77 343,77 340.5,74" fill="#3c78c0"/></svg><div class="t" style="left:355px;top:77px;font-size:11px;line-height:11px;color:#444;font-weight:normal;">A</div><svg class="s" style="left:361px;top:72px" width="8" height="6" viewBox="361 72 8 6"><polygon points="362,74 367,74 364.5,77" fill="#3c78c0"/></svg><div class="t" style="left:114px;top:105px;font-size:13px;line-height:13px;color:#444;font-weight:bold;">B</div><div class="t" style="left:139px;top:104px;font-size:15px;line-height:15px;color:#444;font-weight:bold;font-family:'Liberation Serif',serif;font-style:italic">I</div><div class="t" style="left:162px;top:105px;font-size:13px;line-height:13px;color:#444;font-weight:bold;">U</div><div class="r" style="left:162px;top:117px;width:9px;height:1px;background:#444"></div><svg class="s" style="left:181px;top:110px;" width="8" height="5" viewBox="0 0 8 5"><path d="M0.8,0.8 L3.8,3.8 L6.8,0.8" fill="none" stroke="#333" stroke-width="1.4"/></svg><div class="r" style="left:197px;top:102px;width:1px;height:21px;background:#c8c8c8"></div><svg class="s" style="left:205px;top:103px" width="16" height="16" viewBox="205 103 16 16"><rect x="206" y="105" width="1" height="1" fill="#777"/><rect x="206" y="107" width="1" height="1" fill="#777"/><rect x="206" y="109" width="1" height="1" fill="#777"/><rect x="206" y="111" width="1" height="1" fill="#777"/><rect x="206" y="113" width="1" height="1" fill="#777"/><rect x="206" y="115" width="1" height="1" fill="#777"/><rect x="208" y="105" width="1" height="1" fill="#777"/><rect x="208" y="111" width="1" height="1" fill="#777"/><rect x="210" y="105" width="1" height="1" fill="#777"/><rect x="210" y="111" width="1" height="1" fill="#777"/><rect x="212" y="105" width="1" height="1" fill="#777"/><rect x="212" y="107" width="1" height="1" fill="#777"/><rect x="212" y="109" width="1" height="1" fill="#777"/><rect x="212" y="111" width="1" height="1" fill="#777"/><rect x="212" y="113" width="1" height="1" fill="#777"/><rect x="212" y="115" width="1" height="1" fill="#777"/><rect x="214" y="105" width="1" height="1" fill="#777"/><rect x="214" y="111" width="1" height="1" fill="#777"/><rect x="216" y="105" width="1" height="1" fill="#777"/><rect x="216" y="111" width="1" height="1" fill="#777"/><rect x="218" y="105" width="1" height="1" fill="#777"/><rect x="218" y="107" width="1" height="1" fill="#777"/><rect x="218" y="109" width="1" height="1" fill="#777"/><rect x="218" y="111" width="1" height="1" fill="#777"/><rect x="218" y="113" width="1" height="1" fill="#777"/><rect x="218" y="115" width="1" height="1" fill="#777"/><rect x="206" y="117" width="13" height="1" fill="#444"/></svg><svg class="s" style="left:227px;top:110px;" width="8" height="5" viewBox="0 0 8 5"><path d="M0.8,0.8 L3.8,3.8 L6.8,0.8" fill="none" stroke="#333" stroke-width="1.4"/></svg><div class="r" style="left:243px;top:102px;width:1px;height:21px;background:#c8c8c8"></div><svg class="s" style="left:250px;top:101px" width="20" height="22" viewBox="250 101 20 22"><path d="M253.5,110 L259,104.5 L264.5,110 L259,115.5 Z" fill="#fff" stroke="#444"/><path d="M257,106 V103.5 Q258.5,102 260,103.5 V108" fill="none" stroke="#444"/><path d="M264,106 Q267,108 265.5,112" stroke="#3c78c0" stroke-width="1.6" fill="none"/><rect x="251" y="116" width="16" height="4" fill="#ffff00"/></svg><svg class="s" style="left:273px;top:110px;" width="8" height="5" viewBox="0 0 8 5"><path d="M0.8,0.8 L3.8,3.8 L6.8,0.8" fill="none" stroke="#333" stroke-width="1.4"/></svg><div class="t" style="left:293px;top:104px;font-size:14px;line-height:14px;color:#444;font-weight:bold;">A</div><div class="r" style="left:290px;top:116px;width:16px;height:4px;background:#ff0000"></div><svg class="s" style="left:312px;top:110px;" width="8" height="5" viewBox="0 0 8 5"><path d="M0.8,0.8 L3.8,3.8 L6.8,0.8" fill="none" stroke="#333" stroke-width="1.4"/></svg><div class="r" style="left:328px;top:102px;width:1px;height:21px;background:#c8c8c8"></div><div class="t" style="left:337px;top:104px;font-size:8px;line-height:8px;color:#333;font-weight:normal;">wén</div><div class="t" style="left:341px;top:112px;font-size:9px;line-height:9px;color:#3c78c0;font-weight:normal;-webkit-text-stroke:0.3px #3c78c0">文</div><svg class="s" style="left:358px;top:110px;" width="8" height="5" viewBox="0 0 8 5"><path d="M0.8,0.8 L3.8,3.8 L6.8,0.8" fill="none" stroke="#333" stroke-width="1.4"/></svg><div class="t" style="left:216px;top:137px;font-size:12px;line-height:12px;color:#1f1f1f;font-weight:normal;">字体</div><svg class="s" style="left:366px;top:141px;" width="9" height="9" viewBox="0 0 9 9"><path d="M0.5,7 V0.5 H7" fill="none" stroke="#1a1a1a" stroke-width="1"/><path d="M3,3 L7.5,7.5 M7.5,4 V7.5 H4" fill="none" stroke="#1a1a1a" stroke-width="1"/></svg><svg class="s" style="left:390px;top:73px;" width="16" height="9" viewBox="0 0 16 9"><rect x="0" y="0" width="14" height="1" fill="#555"/><rect x="1.2" y="3" width="11.6" height="1" fill="#555"/><rect x="0" y="6" width="14" height="1" fill="#555"/></svg><div class="r" style="left:410px;top:70px;width:22px;height:23px;box-sizing:border-box;background:#c6c6c6;border:1px solid #9a9a9a"></div><svg class="s" style="left:414px;top:77px;" width="16" height="9" viewBox="0 0 16 9"><rect x="0" y="0" width="13.6" height="1" fill="#555"/><rect x="1.1" y="3" width="11.6" height="1" fill="#555"/><rect x="0" y="6" width="13.6" height="1" fill="#555"/></svg><svg class="s" style="left:438px;top:82px;" width="16" height="9" viewBox="0 0 16 9"><rect x="0" y="0" width="14" height="1" fill="#555"/><rect x="1.2" y="3" width="11.6" height="1" fill="#555"/><rect x="0" y="6" width="14" height="1" fill="#555"/></svg><div class="r" style="left:460px;top:71px;width:1px;height:21px;background:#c8c8c8"></div><svg class="s" style="left:464px;top:70px" width="24" height="22" viewBox="464 70 24 22"><text x="471.5" y="86" font-size="11.5" fill="#444" font-family="Liberation Sans" transform="rotate(-45 471.5 86)" stroke="#444" stroke-width="0.25">ab</text><path d="M474.3,87.5 L483.5,78.3" stroke="#444" stroke-width="1.1"/><path d="M480.6,78 H483.9 V81.3" stroke="#444" stroke-width="1.1" fill="none"/></svg><svg class="s" style="left:487.5px;top:79px;" width="8" height="5" viewBox="0 0 8 5"><path d="M0.8,0.8 L3.8,3.8 L6.8,0.8" fill="none" stroke="#333" stroke-width="1.4"/></svg><div class="r" style="left:515px;top:69px;width:1px;height:55px;background:#c8c8c8"></div><div class="r" style="left:520px;top:70px;width:77px;height:23px;box-sizing:border-box;background:#c6c6c6;border:1px solid #9a9a9a"></div><div class="t" style="left:525px;top:72px;font-size:10.5px;line-height:10px;color:#444;font-weight:normal;">ab</div><div class="t" style="left:525px;top:79.5px;font-size:10.5px;line-height:10px;color:#444;font-weight:normal;">c</div><svg class="s" style="left:530px;top:81px" width="8" height="8" viewBox="530 81 8 8"><path d="M535.8,83 V85.2 H532.5 M534,83.8 L532.3,85.2 L534,86.6" stroke="#3c78c0" fill="none" stroke-width="1.1"/></svg><div class="t" style="left:542px;top:75px;font-size:12px;line-height:12px;color:#1f1f1f;font-weight:normal;">自动换行</div><svg class="s" style="left:390px;top:107px;" width="16" height="12" viewBox="0 0 16 12"><rect x="0" y="0" width="14" height="1" fill="#555"/><rect x="0" y="3" width="9.7" height="1" fill="#555"/><rect x="0" y="6" width="14" height="1" fill="#555"/><rect x="0" y="9" width="9.7" height="1" fill="#555"/></svg><div class="r" style="left:410px;top:101px;width:22px;height:23px;box-sizing:border-box;background:#c6c6c6;border:1px solid #9a9a9a"></div><svg class="s" style="left:414px;top:107px;" width="16" height="12" viewBox="0 0 16 12"><rect x="0" y="0" width="13.6" height="1" fill="#555"/><rect x="1.8" y="3" width="10" height="1" fill="#555"/><rect x="0" y="6" width="13.6" height="1" fill="#555"/><rect x="1.8" y="9" width="10" height="1" fill="#555"/></svg><svg class="s" style="left:438px;top:107px;" width="16" height="12" viewBox="0 0 16 12"><rect x="0" y="0" width="14" height="1" fill="#555"/><rect x="4.2" y="3" width="9.8" height="1" fill="#555"/><rect x="0" y="6" width="14" height="1" fill="#555"/><rect x="4.2" y="9" width="9.8" height="1" fill="#555"/></svg><div class="r" style="left:460px;top:100px;width:1px;height:23px;background:#c8c8c8"></div><svg class="s" style="left:466px;top:103px" width="20" height="17" viewBox="466 103 20 17"><path d="M468,105.5 H484 M476,108.5 H484 M476,111.5 H484 M476,114.5 H484 M468,117.5 H484" stroke="#555"/><path d="M468.6,111.2 H474.5 M471.8,108.2 L468.8,111.2 L471.8,114.2" stroke="#3c78c0" stroke-width="1.7" fill="none"/></svg><svg class="s" style="left:490px;top:103px" width="20" height="17" viewBox="490 103 20 17"><path d="M492,105.5 H508 M500,108.5 H508 M500,111.5 H508 M500,114.5 H508 M492,117.5 H508" stroke="#555"/><path d="M492,111.2 H498 M495.2,108.2 L498.2,111.2 L495.2,114.2" stroke="#3c78c0" stroke-width="1.7" fill="none"/></svg><svg class="s" style="left:522px;top:103px;" width="17" height="17" viewBox="0 0 17 17"><rect x="1.5" y="1.5" width="14" height="14" fill="#fff" stroke="#666"/><path d="M1.5,5.5 H15.5 M1.5,11.5 H15.5 M8.5,1.5 V5.5 M8.5,11.5 V15.5" stroke="#666"/><path d="M3,8.5 H14 M5,7 L3,8.5 L5,10 M12,7 L14,8.5 L12,10" stroke="#3a78c0" fill="none"/></svg><div class="t" style="left:542px;top:106px;font-size:12px;line-height:12px;color:#1f1f1f;font-weight:normal;">合并后居中</div><svg class="s" style="left:617px;top:110px;" width="8" height="5" viewBox="0 0 8 5"><path d="M0.8,0.8 L3.8,3.8 L6.8,0.8" fill="none" stroke="#333" stroke-width="1.4"/></svg><div class="t" style="left:477px;top:137px;font-size:12px;line-height:12px;color:#1f1f1f;font-weight:normal;">对齐方式</div><svg class="s" style="left:629px;top:141px;" width="9" height="9" viewBox="0 0 9 9"><path d="M0.5,7 V0.5 H7" fill="none" stroke="#1a1a1a" stroke-width="1"/><path d="M3,3 L7.5,7.5 M7.5,4 V7.5 H4" fill="none" stroke="#1a1a1a" stroke-width="1"/></svg><div class="r" style="left:649px;top:70px;width:140px;height:23px;box-sizing:border-box;background:#fff;border:1px solid #ababab"></div><div class="t" style="left:652px;top:75px;font-size:12px;line-height:12px;color:#000;font-weight:normal;">文本</div><svg class="s" style="left:777px;top:80px;" width="7" height="5" viewBox="0 0 7 5"><polygon points="0,0.5 6,0.5 3,3.5" fill="#555"/></svg><svg class="s" style="left:650px;top:102px" width="20" height="20" viewBox="650 102 20 20"><rect x="652.7" y="104.7" width="13.6" height="7" fill="#fff" stroke="#3c78c0" stroke-width="1.4"/><circle cx="659.5" cy="108.2" r="2" fill="#3c78c0"/><ellipse cx="664" cy="113.3" rx="3.8" ry="1.5" fill="#e8b86a" stroke="#f3f3f3" stroke-width="0.6"/><ellipse cx="664" cy="116.1" rx="3.8" ry="1.5" fill="#e8b86a" stroke="#f3f3f3" stroke-width="0.6"/><ellipse cx="661" cy="119" rx="3.8" ry="1.5" fill="#e8b86a" stroke="#f3f3f3" stroke-width="0.6"/></svg><svg class="s" style="left:673px;top:110px;" width="8" height="5" viewBox="0 0 8 5"><path d="M0.8,0.8 L3.8,3.8 L6.8,0.8" fill="none" stroke="#333" stroke-width="1.4"/></svg><div class="t" style="left:694px;top:105px;font-size:14px;line-height:14px;color:#444;font-weight:normal;">%</div><div class="t" style="left:718px;top:103px;font-size:14px;line-height:14px;color:#444;font-weight:bold;">,</div><div class="r" style="left:738px;top:102px;width:1px;height:21px;background:#c8c8c8"></div><svg class="s" style="left:745px;top:104px;" width="16" height="15" viewBox="0 0 16 15"><text x="6" y="7" font-size="8" fill="#444" font-family="Liberation Sans">.0</text><text x="3" y="14" font-size="8" fill="#444" font-family="Liberation Sans">.00</text><path d="M0.5,3.5 H6 M3,1 L0.5,3.5 L3,6" stroke="#3a78c0" fill="none" stroke-width="1.2"/></svg><svg class="s" style="left:769px;top:104px;" width="16" height="15" viewBox="0 0 16 15"><text x="3" y="7" font-size="8" fill="#444" font-family="Liberation Sans">.00</text><text x="6" y="14" font-size="8" fill="#444" font-family="Liberation Sans">.0</text><path d="M0.5,10.5 H6 M3.5,8 L6,10.5 L3.5,13" stroke="#3a78c0" fill="none" stroke-width="1.2"/></svg><div class="t" style="left:698px;top:137px;font-size:12px;line-height:12px;color:#1f1f1f;font-weight:normal;">数字</div><svg class="s" style="left:785px;top:141px;" width="9" height="9" viewBox="0 0 9 9"><path d="M0.5,7 V0.5 H7" fill="none" stroke="#1a1a1a" stroke-width="1"/><path d="M3,3 L7.5,7.5 M7.5,4 V7.5 H4" fill="none" stroke="#1a1a1a" stroke-width="1"/></svg><svg class="s" style="left:808px;top:66px" width="34" height="30" viewBox="808 66 34 30"><path d="M815.2,73.3 Q813,74 812.1,89.9 L833.5,92.5 L834.4,89.4" fill="none" stroke="#e8490f" stroke-width="1"/><rect x="817.1" y="69.9" width="21.8" height="18.1" rx="1.8" fill="#e8490f"/><rect x="831" y="70.5" width="7.3" height="5" fill="#f4925a"/><rect x="818" y="76.1" width="6" height="2.9000000000000057" fill="#fff"/><rect x="818" y="80.1" width="6" height="2.9000000000000057" fill="#fff"/><rect x="818" y="84.2" width="6" height="2.799999999999997" fill="#fff"/><rect x="825" y="76.1" width="6" height="2.9000000000000057" fill="#fff"/><rect x="825" y="80.1" width="6" height="2.9000000000000057" fill="#fff"/><rect x="825" y="84.2" width="6" height="2.799999999999997" fill="#fff"/><rect x="832" y="76.1" width="6.2000000000000455" height="2.9000000000000057" fill="#fff"/><rect x="832" y="80.1" width="6.2000000000000455" height="2.9000000000000057" fill="#fff"/><rect x="832" y="84.2" width="6.2000000000000455" height="2.799999999999997" fill="#fff"/></svg><svg class="s" style="left:858px;top:66px" width="34" height="30" viewBox="858 66 34 30"><rect x="861.7" y="70.5" width="22" height="20.3" rx="1.5" fill="none" stroke="#1e8a45" stroke-width="1.1"/><path d="M868.6,70.5 V90.8 M876.4,70.5 V90.8 M861.7,75.4 H883.7 M861.7,80.4 H883.7 M861.7,85.3 H883.7" stroke="#1e8a45" stroke-width="1.1"/><path d="M887,73.5 Q889.5,75 886,83 L882,89 Q879,92.5 873.8,92.7 Q877,89 879,84 L883.5,76 Q885,73 887,73.5 Z" fill="#21a35e" stroke="#f3f3f3" stroke-width="0.8"/></svg><div class="t" style="left:814px;top:101px;font-size:12px;line-height:12px;color:#1f1f1f;font-weight:normal;">模板</div><div class="t" style="left:849px;top:101px;font-size:12px;line-height:12px;color:#1f1f1f;font-weight:normal;">表格美化</div><div class="t" style="left:821px;top:137px;font-size:12px;line-height:12px;color:#1f1f1f;font-weight:normal;">OfficePLUS</div><svg class="s" style="left:925px;top:64px" width="36" height="36" viewBox="925 64 36 36"><rect x="928.5" y="67.5" width="27" height="24" fill="#fff" stroke="#808080"/><path d="M928.5,73.5 H955.5 M928.5,79.5 H955.5 M928.5,85.5 H955.5 M935.5,67.5 V91.5 M948.5,67.5 V91.5" stroke="#808080"/><rect x="936" y="68" width="6" height="5" fill="#e0582e"/><rect x="936" y="74" width="11" height="5" fill="#3c78c0"/><rect x="936" y="80" width="9" height="5" fill="#e0582e"/><rect x="936" y="86" width="4" height="5" fill="#3c78c0"/><rect x="942.5" y="84.5" width="15" height="12" fill="#fff" stroke="#808080"/><text x="945.5" y="94.5" font-size="11" fill="#222" font-family="Liberation Sans">≠</text></svg><div class="t" style="left:918px;top:101px;font-size:12px;line-height:12px;color:#1f1f1f;font-weight:normal;">条件格式</div><svg class="s" style="left:940px;top:119px;" width="8" height="5" viewBox="0 0 8 5"><path d="M0.8,0.8 L3.8,3.8 L6.8,0.8" fill="none" stroke="#333" stroke-width="1.4"/></svg><svg class="s" style="left:985px;top:66px" width="36" height="34" viewBox="985 66 36 34"><rect x="988.5" y="69.5" width="24" height="20" fill="#fff" stroke="#808080"/><rect x="994.5" y="74.5" width="18" height="15" fill="#c5d7ec"/><path d="M988.5,74.5 H1012.5 M988.5,79.5 H1012.5 M988.5,84.5 H1012.5 M994.5,69.5 V89.5 M1000.5,69.5 V89.5 M1006.5,69.5 V89.5" stroke="#808080"/><path d="M1017,75 L1017.5,79 L1009,88.5 L1006,86 Z" fill="#777" stroke="#f3f3f3" stroke-width="0.8"/><path d="M1005.5,86.5 Q1008.5,88 1007,91 Q1003,96.5 994.4,96.5 Q997,90 1002,87 Q1004,86 1005.5,86.5 Z" fill="#3c78c0" stroke="#f3f3f3" stroke-width="0.8"/></svg><div class="t" style="left:989px;top:101px;font-size:12px;line-height:12px;color:#1f1f1f;font-weight:normal;">套用</div><div class="t" style="left:971px;top:116px;font-size:12px;line-height:12px;color:#1f1f1f;font-weight:normal;">表格格式</div><svg class="s" style="left:1022px;top:119px;" width="8" height="5" viewBox="0 0 8 5"><path d="M0.8,0.8 L3.8,3.8 L6.8,0.8" fill="none" stroke="#333" stroke-width="1.4"/></svg><svg class="s" style="left:1050px;top:64px" width="36" height="34" viewBox="1050 64 36 34"><rect x="1053.5" y="67.5" width="25" height="21" fill="#fff" stroke="#808080"/><rect x="1059" y="73" width="13.5" height="9.5" fill="#c5d7ec"/><path d="M1053.5,72.5 H1078.5 M1053.5,82.5 H1078.5 M1058.5,67.5 V88.5 M1072.5,67.5 V88.5" stroke="#808080"/><path d="M1082,72.8 L1082,77 L1074,86 L1071,83.5 Z" fill="#777" stroke="#f3f3f3" stroke-width="0.8"/><path d="M1070.5,84 Q1073.5,85.5 1072,88.5 Q1068,94.7 1059.8,94.7 Q1062,88 1067,84.5 Q1069,83.5 1070.5,84 Z" fill="#3c78c0" stroke="#f3f3f3" stroke-width="0.8"/></svg><div class="t" style="left:1036px;top:101px;font-size:12px;line-height:12px;color:#1f1f1f;font-weight:normal;">单元格样式</div><svg class="s" style="left:1064px;top:119px;" width="8" height="5" viewBox="0 0 8 5"><path d="M0.8,0.8 L3.8,3.8 L6.8,0.8" fill="none" stroke="#333" stroke-width="1.4"/></svg><div class="t" style="left:995px;top:137px;font-size:12px;line-height:12px;color:#1f1f1f;font-weight:normal;">样式</div><svg class="s" style="left:1120px;top:64px" width="32" height="34" viewBox="1120 64 32 34"><rect x="1123.7" y="67.7" width="13.5" height="5" fill="#fff" stroke="#808080"/><path d="M1130.5,67.7 V72.7" stroke="#808080"/><rect x="1134.8" y="75.7" width="13.5" height="4.5" fill="#c5d7ec" stroke="#808080"/><path d="M1141.5,75.7 V80.2" stroke="#808080"/><rect x="1123.7" y="83.7" width="13.5" height="9.5" fill="#fff" stroke="#808080"/><path d="M1130.5,83.7 V93.2 M1123.7,88.5 H1137.2" stroke="#808080"/><path d="M1125,78 H1131 M1127.5,75.5 L1125,78 L1127.5,80.5" stroke="#3c78c0" stroke-width="1.8" fill="none"/></svg><div class="t" style="left:1124px;top:101px;font-size:12px;line-height:12px;color:#1f1f1f;font-weight:normal;">插入</div><svg class="s" style="left:1134px;top:119px;" width="8" height="5" viewBox="0 0 8 5"><path d="M0.8,0.8 L3.8,3.8 L6.8,0.8" fill="none" stroke="#333" stroke-width="1.4"/></svg><svg class="s" style="left:1162px;top:64px" width="34" height="34" viewBox="1162 64 34 34"><rect x="1164.7" y="67.7" width="13.5" height="5" fill="#fff" stroke="#808080"/><path d="M1171.5,67.7 V72.7" stroke="#808080"/><rect x="1170.8" y="75.7" width="7" height="4.5" fill="#c5d7ec" stroke="#808080"/><path d="M1177.8,75.7 L1181.5,78 L1177.8,80.2" fill="#c5d7ec"/><rect x="1164.7" y="84.7" width="13.5" height="9.5" fill="#fff" stroke="#808080"/><path d="M1171.5,84.7 V94.2 M1164.7,89.5 H1178.2" stroke="#808080"/><path d="M1179.5,73 L1192.5,85.5 M1192.5,73.5 L1179,85.5" stroke="#f3f3f3" stroke-width="4"/><path d="M1179.5,73 L1192.5,85.5 M1192.5,73.5 L1179,85.5" stroke="#e0582e" stroke-width="2.3"/></svg><div class="t" style="left:1166px;top:101px;font-size:12px;line-height:12px;color:#1f1f1f;font-weight:normal;">删除</div><svg class="s" style="left:1176px;top:119px;" width="8" height="5" viewBox="0 0 8 5"><path d="M0.8,0.8 L3.8,3.8 L6.8,0.8" fill="none" stroke="#333" stroke-width="1.4"/></svg><svg class="s" style="left:1204px;top:64px" width="32" height="34" viewBox="1204 64 32 34"><path d="M1206.7,66 V70.6 M1228.5,66 V70.6 M1207.5,68.4 H1227.5 M1210,66.2 L1207.6,68.4 L1210,70.6 M1225,66.2 L1227.4,68.4 L1225,70.6" stroke="#3c78c0" stroke-width="1" fill="none"/><rect x="1206.7" y="72.7" width="27" height="19.5" fill="#fff" stroke="#808080"/><path d="M1206.7,77.5 H1233.7 M1206.7,87.4 H1233.7 M1213.7,72.7 V92.2 M1221.6,72.7 V92.2 M1228.4,72.7 V92.2" stroke="#808080"/><rect x="1214.2" y="78" width="7" height="9" fill="#3c78c0"/><path d="M1206.7,92.2 V96.2 H1213.5 L1216,93.5 L1217,96.2 H1222.5 L1226,92.2" fill="#fff" stroke="#808080"/></svg><div class="t" style="left:1208px;top:101px;font-size:12px;line-height:12px;color:#1f1f1f;font-weight:normal;">格式</div><svg class="s" style="left:1218px;top:119px;" width="8" height="5" viewBox="0 0 8 5"><path d="M0.8,0.8 L3.8,3.8 L6.8,0.8" fill="none" stroke="#333" stroke-width="1.4"/></svg><div class="t" style="left:1159px;top:137px;font-size:12px;line-height:12px;color:#1f1f1f;font-weight:normal;">单元格</div><svg class="s" style="left:1258px;top:63px" width="20" height="20" viewBox="1258 63 20 20"><path d="M1260.2,64.9 H1275.3 V67.4 H1264.5 L1270.5,72.5 L1264.5,77.5 H1275.3 V80 H1260.2 V77.8 L1267,72.5 L1260.2,67.2 Z" fill="#444"/></svg><div class="t" style="left:1280px;top:68px;font-size:12px;line-height:12px;color:#1f1f1f;font-weight:normal;">自动求和</div><svg class="s" style="left:1342px;top:71px;" width="8" height="5" viewBox="0 0 8 5"><path d="M0.8,0.8 L3.8,3.8 L6.8,0.8" fill="none" stroke="#333" stroke-width="1.4"/></svg><svg class="s" style="left:1259px;top:86px" width="20" height="20" viewBox="1259 86 20 20"><rect x="1261.5" y="88.5" width="13" height="14.5" fill="#fff" stroke="#777"/><rect x="1261" y="88" width="14" height="3" fill="#777"/><path d="M1268,92.7 V100.5 M1265,97.5 L1268,100.8 L1271,97.5" stroke="#3c78c0" stroke-width="1.7" fill="none"/></svg><div class="t" style="left:1280px;top:91px;font-size:12px;line-height:12px;color:#1f1f1f;font-weight:normal;">填充</div><svg class="s" style="left:1307px;top:94px;" width="8" height="5" viewBox="0 0 8 5"><path d="M0.8,0.8 L3.8,3.8 L6.8,0.8" fill="none" stroke="#333" stroke-width="1.4"/></svg><svg class="s" style="left:1259px;top:109px" width="18" height="18" viewBox="1259 109 18 18"><path d="M1270,112 L1274.2,116.2 L1266.2,124.6 L1261.6,120 Z" fill="#e9869a"/><path d="M1261.6,120 L1264,117.6 L1268.4,122.2 L1266.2,124.6 Z" fill="#f2b3c0"/></svg><div class="t" style="left:1280px;top:114px;font-size:12px;line-height:12px;color:#1f1f1f;font-weight:normal;">清除</div><svg class="s" style="left:1307px;top:117px;" width="8" height="5" viewBox="0 0 8 5"><path d="M0.8,0.8 L3.8,3.8 L6.8,0.8" fill="none" stroke="#333" stroke-width="1.4"/></svg><svg class="s" style="left:1372px;top:64px" width="36" height="34" viewBox="1372 64 36 34"><text x="1375.3" y="79.4" font-size="14" fill="#3c78c0" stroke="#3c78c0" stroke-width="0.6" font-family="Liberation Sans">A</text><text x="1375.8" y="94" font-size="14" fill="#9b59c6" stroke="#9b59c6" stroke-width="0.6" font-family="Liberation Sans">Z</text><path d="M1387.2,74.8 H1404 L1397.5,82 V89.8 H1393.7 V82 Z" fill="#777"/><path d="M1389.5,76.3 H1401.7 L1396.3,81.8 V88.3 H1395 V81.5 Z" fill="#999"/></svg><div class="t" style="left:1360px;top:101px;font-size:12px;line-height:12px;color:#1f1f1f;font-weight:normal;">排序和筛选</div><svg class="s" style="left:1388px;top:119px;" width="8" height="5" viewBox="0 0 8 5"><path d="M0.8,0.8 L3.8,3.8 L6.8,0.8" fill="none" stroke="#333" stroke-width="1.4"/></svg><svg class="s" style="left:1438px;top:64px" width="34" height="34" viewBox="1438 64 34 34"><circle cx="1458" cy="76.5" r="8.3" fill="#fff" stroke="#3f7fc1" stroke-width="1.9"/><path d="M1451.5,83 L1443.5,91.5" stroke="#3f7fc1" stroke-width="3" stroke-linecap="round"/></svg><div class="t" style="left:1425px;top:101px;font-size:12px;line-height:12px;color:#1f1f1f;font-weight:normal;">查找和选择</div><svg class="s" style="left:1453px;top:119px;" width="8" height="5" viewBox="0 0 8 5"><path d="M0.8,0.8 L3.8,3.8 L6.8,0.8" fill="none" stroke="#333" stroke-width="1.4"/></svg><div class="t" style="left:1360px;top:137px;font-size:12px;line-height:12px;color:#1f1f1f;font-weight:normal;">编辑</div><svg class="s" style="left:1505px;top:63px" width="20" height="20" viewBox="1505 63 20 20"><rect x="1507.8" y="65.8" width="14.7" height="14.5" rx="1.2" fill="#fff" stroke="#1e9b50" stroke-width="1.2"/><path d="M1507.8,70.5 H1522.5 M1507.8,75.5 H1522.5 M1512.5,65.8 V80.3 M1517.5,65.8 V80.3" stroke="#1e9b50" stroke-width="1.1"/><path d="M1514,73.5 H1523.5 L1520,77.5 V81 L1517.5,80 V77.5 Z" fill="#1e9b50" stroke="#f3f3f3" stroke-width="0.6"/></svg><div class="t" style="left:1526px;top:67px;font-size:12px;line-height:12px;color:#1f1f1f;font-weight:normal;">高级筛选</div><svg class="s" style="left:1505px;top:86px" width="20" height="20" viewBox="1505 86 20 20"><path d="M1519,89 H1507.8 V102.8 H1515" fill="none" stroke="#1e9b50" stroke-width="1.1"/><path d="M1521.5,89 V95" stroke="#1e9b50" stroke-width="1.1"/><text x="1509" y="99" font-size="10" fill="#444" font-family="Liberation Sans">A</text><circle cx="1518.7" cy="99.5" r="2.5" fill="#fff" stroke="#1e9b50" stroke-width="1.8"/><path d="M1518.7,95.5 V103.5 M1514.7,99.5 H1522.7" stroke="#1e9b50" stroke-width="1.2"/><circle cx="1518.7" cy="99.5" r="1.2" fill="#fff"/></svg><div class="t" style="left:1526px;top:91px;font-size:12px;line-height:12px;color:#1f1f1f;font-weight:normal;">文本提取</div><svg class="s" style="left:1578px;top:94px;" width="8" height="5" viewBox="0 0 8 5"><path d="M0.8,0.8 L3.8,3.8 L6.8,0.8" fill="none" stroke="#333" stroke-width="1.4"/></svg><svg class="s" style="left:1505px;top:109px" width="20" height="20" viewBox="1505 109 20 20"><path d="M1507.5,113 V126 H1520" fill="none" stroke="#1e9b50" stroke-width="1"/><path d="M1508.5,112 H1519" fill="none" stroke="#1e9b50" stroke-width="1"/><rect x="1509.8" y="113.3" width="12.7" height="13" rx="1.3" fill="#fff" stroke="#1e9b50" stroke-width="1.3"/><path d="M1513,116.5 L1519.3,123 M1519.3,116.5 L1513,123" stroke="#1e9b50" stroke-width="2.6"/></svg><div class="t" style="left:1526px;top:114px;font-size:12px;line-height:12px;color:#1f1f1f;font-weight:normal;">批量删除</div><svg class="s" style="left:1578px;top:117px;" width="8" height="5" viewBox="0 0 8 5"><path d="M0.8,0.8 L3.8,3.8 L6.8,0.8" fill="none" stroke="#333" stroke-width="1.4"/></svg><svg class="s" style="left:1609px;top:67px" width="30" height="28" viewBox="1609 67 30 28"><rect x="1612.3" y="70.2" width="15.5" height="13" rx="1" fill="#fff" stroke="#1e9b50" stroke-width="1.1"/><rect x="1612" y="70" width="16" height="3.2" fill="#1e9b50"/><path d="M1612.3,76.7 H1627.8 M1612.3,80 H1627.8 M1617.5,70.2 V83.2" stroke="#1e9b50"/><rect x="1620.3" y="79.3" width="15.2" height="12.2" rx="1" fill="#fff" stroke="#1e9b50" stroke-width="1.2"/><rect x="1620" y="79" width="16" height="3" fill="#1e9b50"/><rect x="1633" y="79" width="3" height="12.5" fill="#1e9b50"/><path d="M1620.3,85 H1635 M1620.3,88.3 H1635 M1625.5,79.3 V91.5 M1629.5,79.3 V91.5" stroke="#1e9b50"/><path d="M1612.5,84.5 V89.5 H1618.5 M1616.5,87.5 L1618.5,89.5 L1616.5,91.5" stroke="#1e9b50" fill="none" stroke-width="1.1"/></svg><div class="t" style="left:1600px;top:101px;font-size:12px;line-height:12px;color:#1f1f1f;font-weight:normal;">查找录入</div><div class="t" style="left:1595px;top:116px;font-size:12px;line-height:12px;color:#1f1f1f;font-weight:normal;">VLOOKUP</div><svg class="s" style="left:1667px;top:66px" width="30" height="29" viewBox="1667 66 30 29"><rect x="1670.6" y="69.2" width="15" height="15" rx="1" fill="#fff" stroke="#1e9b50" stroke-width="1.2"/><rect x="1670" y="68.7" width="16" height="3" fill="#1e9b50"/><path d="M1670.6,75 H1676 M1670.6,79 H1676 M1674,69.2 V84.2" stroke="#1e9b50"/><rect x="1677.8" y="76.5" width="15.8" height="15.8" rx="1" fill="#fff" stroke="#1e9b50" stroke-width="1.2"/><rect x="1677.5" y="76" width="16.5" height="3" fill="#1e9b50"/><path d="M1677.8,89 H1693.6 M1681.5,89 V92.3 M1685.5,89 V92.3 M1689.5,89 V92.3 M1690.5,79 V89" stroke="#1e9b50"/><path d="M1680.5,78.5 L1686.5,84.5 M1680.5,78.5 H1683 M1680.5,78.5 V81 M1686.5,84.5 H1684 M1686.5,84.5 V82" stroke="#1e9b50" fill="none" stroke-width="1"/></svg><div class="t" style="left:1658px;top:101px;font-size:12px;line-height:12px;color:#1f1f1f;font-weight:normal;">拆分合并</div><div class="t" style="left:1664px;top:116px;font-size:12px;line-height:12px;color:#1f1f1f;font-weight:normal;">表格</div><svg class="s" style="left:1693px;top:119px;" width="8" height="5" viewBox="0 0 8 5"><path d="M0.8,0.8 L3.8,3.8 L6.8,0.8" fill="none" stroke="#333" stroke-width="1.4"/></svg><div class="t" style="left:1582px;top:137px;font-size:12px;line-height:12px;color:#1f1f1f;font-weight:normal;">便捷工具</div><svg class="s" style="left:1738px;top:73px" width="14" height="14" viewBox="1738 73 14 14"><circle cx="1745" cy="79.8" r="5" fill="#ff9a00"/></svg><div class="t" style="left:1740px;top:101px;font-size:12px;line-height:12px;color:#1f1f1f;font-weight:normal;">加</div><div class="t" style="left:1734px;top:116px;font-size:12px;line-height:12px;color:#1f1f1f;font-weight:normal;">载项</div><div class="t" style="left:1727px;top:137px;font-size:12px;line-height:12px;color:#1f1f1f;font-weight:normal;">加载项</div><svg class="s" style="left:1789px;top:66px" width="30" height="30" viewBox="1789 66 30 30"><rect x="1792.3" y="69.6" width="17.2" height="13" rx="1" fill="#fff" stroke="#1e9b50" stroke-width="1.1"/><path d="M1793,79 Q1796,75 1799,77 Q1802,79.5 1805,77.5 L1809,76" fill="none" stroke="#1e9b50" stroke-width="0.9"/><circle cx="1805" cy="72.8" r="1.6" fill="none" stroke="#1e9b50" stroke-width="0.9"/><rect x="1802.5" y="79.5" width="13" height="13" rx="1.2" fill="#fff" stroke="#1e9b50" stroke-width="1.3"/><path d="M1809,81 V83 M1804.3,83.7 H1813.7 M1806.3,84 Q1807.5,89 1813.8,91.2 M1811.7,84 Q1810.5,89 1804.2,91.2" stroke="#1e9b50" stroke-width="1.5" fill="none"/><path d="M1793.2,85 V89.5 H1799 M1797.3,87.8 L1799,89.5 L1797.3,91.2" stroke="#1e9b50" fill="none" stroke-width="1"/></svg><div class="t" style="left:1786px;top:101px;font-size:12px;line-height:12px;color:#1f1f1f;font-weight:normal;">图片转</div><div class="t" style="left:1786px;top:116px;font-size:12px;line-height:12px;color:#1f1f1f;font-weight:normal;">文字</div><svg class="s" style="left:1814px;top:119px;" width="8" height="5" viewBox="0 0 8 5"><path d="M0.8,0.8 L3.8,3.8 L6.8,0.8" fill="none" stroke="#333" stroke-width="1.4"/></svg><svg class="s" style="left:1835px;top:66px" width="30" height="30" viewBox="1835 66 30 30"><rect x="1838.5" y="69.6" width="17" height="15" rx="1.2" fill="#fff" stroke="#1e9b50" stroke-width="1.1"/><text x="1840" y="79.6" font-size="7.2" font-weight="bold" fill="#1e9b50" stroke="#1e9b50" stroke-width="0.2" font-family="Liberation Sans">PDF</text><rect x="1846.2" y="81" width="16" height="11.5" rx="1.5" fill="#f3f3f3"/><path d="M1851,83 V81.5 H1858 V83" fill="none" stroke="#1e9b50" stroke-width="1.1"/><rect x="1847" y="83" width="15" height="9.4" rx="1.2" fill="#1e9b50"/><path d="M1847,87 H1862" stroke="#fff" stroke-width="0.8"/></svg><div class="t" style="left:1827px;top:101px;font-size:12px;line-height:12px;color:#1f1f1f;font-weight:normal;">PDF转换</div><svg class="s" style="left:1848px;top:119px;" width="8" height="5" viewBox="0 0 8 5"><path d="M0.8,0.8 L3.8,3.8 L6.8,0.8" fill="none" stroke="#333" stroke-width="1.4"/></svg><div class="t" style="left:1798px;top:137px;font-size:12px;line-height:12px;color:#1f1f1f;font-weight:normal;">OfficePLUS</div>
</body></html>
